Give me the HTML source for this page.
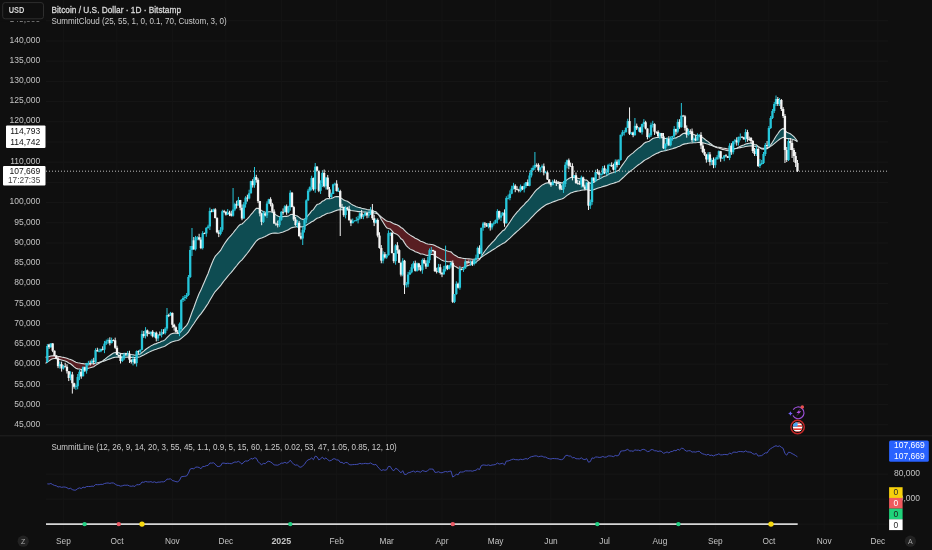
<!DOCTYPE html>
<html><head><meta charset="utf-8"><style>
html,body{margin:0;padding:0;background:#0f0f0f;width:932px;height:550px;overflow:hidden;position:relative}
</style></head><body>
<svg width="932" height="550" viewBox="0 0 932 550" style="position:absolute;left:0;top:0;will-change:transform">
<line x1="46" y1="424.80" x2="888" y2="424.80" stroke="#171717" stroke-width="1"/>
<line x1="46" y1="404.60" x2="888" y2="404.60" stroke="#171717" stroke-width="1"/>
<line x1="46" y1="384.40" x2="888" y2="384.40" stroke="#171717" stroke-width="1"/>
<line x1="46" y1="364.20" x2="888" y2="364.20" stroke="#171717" stroke-width="1"/>
<line x1="46" y1="344.00" x2="888" y2="344.00" stroke="#171717" stroke-width="1"/>
<line x1="46" y1="323.80" x2="888" y2="323.80" stroke="#171717" stroke-width="1"/>
<line x1="46" y1="303.60" x2="888" y2="303.60" stroke="#171717" stroke-width="1"/>
<line x1="46" y1="283.40" x2="888" y2="283.40" stroke="#171717" stroke-width="1"/>
<line x1="46" y1="263.20" x2="888" y2="263.20" stroke="#171717" stroke-width="1"/>
<line x1="46" y1="243.00" x2="888" y2="243.00" stroke="#171717" stroke-width="1"/>
<line x1="46" y1="222.80" x2="888" y2="222.80" stroke="#171717" stroke-width="1"/>
<line x1="46" y1="202.60" x2="888" y2="202.60" stroke="#171717" stroke-width="1"/>
<line x1="46" y1="182.40" x2="888" y2="182.40" stroke="#171717" stroke-width="1"/>
<line x1="46" y1="162.20" x2="888" y2="162.20" stroke="#171717" stroke-width="1"/>
<line x1="46" y1="142.00" x2="888" y2="142.00" stroke="#171717" stroke-width="1"/>
<line x1="46" y1="121.80" x2="888" y2="121.80" stroke="#171717" stroke-width="1"/>
<line x1="46" y1="101.60" x2="888" y2="101.60" stroke="#171717" stroke-width="1"/>
<line x1="46" y1="81.40" x2="888" y2="81.40" stroke="#171717" stroke-width="1"/>
<line x1="46" y1="61.20" x2="888" y2="61.20" stroke="#171717" stroke-width="1"/>
<line x1="46" y1="41.00" x2="888" y2="41.00" stroke="#171717" stroke-width="1"/>
<line x1="46" y1="20.80" x2="888" y2="20.80" stroke="#171717" stroke-width="1"/>
<line x1="63.40" y1="0" x2="63.40" y2="530" stroke="#151515" stroke-width="1"/>
<line x1="116.98" y1="0" x2="116.98" y2="530" stroke="#151515" stroke-width="1"/>
<line x1="172.35" y1="0" x2="172.35" y2="530" stroke="#151515" stroke-width="1"/>
<line x1="225.93" y1="0" x2="225.93" y2="530" stroke="#151515" stroke-width="1"/>
<line x1="281.29" y1="0" x2="281.29" y2="530" stroke="#151515" stroke-width="1"/>
<line x1="336.66" y1="0" x2="336.66" y2="530" stroke="#151515" stroke-width="1"/>
<line x1="386.67" y1="0" x2="386.67" y2="530" stroke="#151515" stroke-width="1"/>
<line x1="442.03" y1="0" x2="442.03" y2="530" stroke="#151515" stroke-width="1"/>
<line x1="495.61" y1="0" x2="495.61" y2="530" stroke="#151515" stroke-width="1"/>
<line x1="550.98" y1="0" x2="550.98" y2="530" stroke="#151515" stroke-width="1"/>
<line x1="604.56" y1="0" x2="604.56" y2="530" stroke="#151515" stroke-width="1"/>
<line x1="659.92" y1="0" x2="659.92" y2="530" stroke="#151515" stroke-width="1"/>
<line x1="715.29" y1="0" x2="715.29" y2="530" stroke="#151515" stroke-width="1"/>
<line x1="768.87" y1="0" x2="768.87" y2="530" stroke="#151515" stroke-width="1"/>
<line x1="824.24" y1="0" x2="824.24" y2="530" stroke="#151515" stroke-width="1"/>
<line x1="877.82" y1="0" x2="877.82" y2="530" stroke="#151515" stroke-width="1"/>
<line x1="46" y1="474.20" x2="888" y2="474.20" stroke="#171717" stroke-width="1"/>
<line x1="46" y1="499.15" x2="888" y2="499.15" stroke="#171717" stroke-width="1"/>
<line x1="46" y1="524.10" x2="888" y2="524.10" stroke="#171717" stroke-width="1"/>
<line x1="0" y1="435.8" x2="932" y2="435.8" stroke="#222" stroke-width="1"/>
<polygon points="45.54,363.39 47.33,362.03 49.11,360.87 50.90,359.51 52.68,358.81 54.47,358.56 56.26,358.52 58.04,359.08 59.83,359.44 61.61,360.09 63.40,360.53 65.19,360.98 66.97,361.72 68.76,362.93 70.54,363.78 72.33,365.22 74.12,366.84 75.90,368.28 77.69,368.89 79.47,369.06 81.26,369.56 83.05,369.31 84.83,369.36 86.62,368.82 88.40,368.30 90.19,367.83 91.98,367.22 93.76,366.74 95.55,365.39 97.33,364.24 99.12,363.17 100.91,362.00 101.14,361.86 101.14,361.86 100.91,361.92 99.12,362.39 97.33,362.79 95.55,363.21 93.76,363.69 91.98,363.74 90.19,363.85 88.40,363.87 86.62,363.90 84.83,363.92 83.05,363.66 81.26,363.52 79.47,363.05 77.69,362.72 75.90,362.18 74.12,361.29 72.33,360.33 70.54,359.48 68.76,358.92 66.97,358.20 65.19,357.72 63.40,357.37 61.61,357.04 59.83,356.61 58.04,356.32 56.26,355.95 54.47,355.85 52.68,355.84 50.90,356.03 49.11,356.49 47.33,356.84 45.54,357.24" fill="#581e22"/>
<polygon points="101.14,361.86 102.69,360.97 104.48,359.55 106.26,358.07 108.05,356.60 109.84,355.48 111.62,354.20 113.41,353.04 115.19,352.55 116.98,352.64 118.77,352.82 120.55,353.35 122.34,353.65 124.12,353.62 125.91,353.63 127.70,353.58 129.48,353.94 131.27,354.45 133.05,354.69 134.84,355.24 136.63,354.84 138.41,354.52 140.20,354.09 141.98,352.48 143.77,351.15 145.56,349.51 147.34,348.23 149.13,347.08 150.91,345.86 152.70,345.09 154.49,344.10 156.27,343.61 158.06,342.86 159.84,342.18 161.63,341.36 163.42,340.65 165.20,339.65 166.99,337.68 168.77,335.91 170.56,334.13 172.35,333.48 174.13,333.14 175.92,333.27 177.70,333.55 179.49,333.21 181.28,331.16 183.06,329.14 184.85,327.24 186.63,325.37 188.42,322.25 190.21,317.23 191.99,312.23 193.78,307.80 195.56,302.72 197.35,297.92 199.14,293.56 200.92,290.10 202.71,285.74 204.49,281.70 206.28,277.51 208.07,273.49 209.85,268.56 211.64,264.06 213.42,259.69 215.21,256.31 217.00,254.26 218.78,252.47 220.57,250.48 222.35,247.19 224.14,244.20 225.93,241.67 227.71,239.18 229.50,237.00 231.28,235.15 233.07,232.98 234.86,230.59 236.64,228.48 238.43,226.11 240.21,224.50 242.00,223.90 243.79,222.31 245.57,220.42 247.36,218.81 249.14,217.00 250.93,214.50 252.72,212.59 254.50,210.26 256.29,208.35 258.07,208.26 259.86,209.15 261.65,210.65 263.43,211.40 265.22,212.28 267.00,212.21 268.79,211.81 270.58,211.80 272.36,212.30 274.15,213.65 275.93,214.88 277.72,216.04 279.51,216.69 281.29,216.64 283.08,216.66 284.86,216.26 286.65,216.41 288.44,216.10 290.22,214.64 292.01,214.28 293.79,214.81 295.58,215.60 297.37,216.05 299.15,217.38 300.94,218.78 302.72,219.38 304.51,219.15 306.30,217.56 308.08,215.47 309.87,213.39 311.65,210.91 313.44,209.60 315.23,206.75 317.01,204.55 318.80,204.04 320.58,202.99 322.37,201.17 324.16,200.43 325.94,199.02 327.73,198.58 329.51,198.71 331.30,198.56 333.09,197.68 334.87,196.82 336.66,196.64 338.44,196.53 340.23,197.65 342.02,198.63 343.80,200.08 345.59,200.72 347.37,201.29 349.16,202.57 350.95,203.89 352.73,204.90 354.52,205.80 356.30,206.64 358.09,207.32 359.88,207.61 361.66,208.19 363.45,208.65 365.23,208.93 367.02,209.42 368.81,209.83 370.59,209.87 372.38,210.47 374.16,211.32 375.95,211.85 377.74,213.54 378.49,214.62 378.49,214.62 377.74,214.10 375.95,213.28 374.16,213.01 372.38,212.63 370.59,212.39 368.81,212.42 367.02,212.30 365.23,212.13 363.45,212.06 361.66,211.89 359.88,211.67 358.09,211.58 356.30,211.32 354.52,211.03 352.73,210.73 350.95,210.42 349.16,210.04 347.37,209.75 345.59,209.84 343.80,209.96 342.02,209.77 340.23,209.82 338.44,209.83 336.66,210.38 334.87,210.92 333.09,211.73 331.30,212.52 329.51,212.95 327.73,213.28 325.94,213.91 324.16,215.00 322.37,215.78 320.58,217.01 318.80,217.82 317.01,218.32 315.23,219.53 313.44,220.99 311.65,221.73 309.87,223.00 308.08,224.11 306.30,225.27 304.51,226.25 302.72,226.70 300.94,226.84 299.15,226.66 297.37,226.55 295.58,226.90 293.79,227.17 292.01,227.61 290.22,228.46 288.44,229.81 286.65,230.60 284.86,231.17 283.08,231.95 281.29,232.48 279.51,233.00 277.72,233.19 275.93,233.16 274.15,233.17 272.36,233.20 270.58,233.70 268.79,234.50 267.00,235.57 265.22,236.57 263.43,237.21 261.65,238.00 259.86,238.56 258.07,239.51 256.29,241.01 254.50,243.37 252.72,245.93 250.93,248.31 249.14,250.95 247.36,253.24 245.57,255.42 243.79,257.70 242.00,259.80 240.21,261.41 238.43,263.43 236.64,265.77 234.86,267.95 233.07,270.21 231.28,272.32 229.50,274.25 227.71,276.33 225.93,278.54 224.14,280.77 222.35,283.19 220.57,285.73 218.78,287.68 217.00,289.56 215.21,291.56 213.42,294.18 211.64,297.21 209.85,300.26 208.07,303.47 206.28,306.17 204.49,308.86 202.71,311.37 200.92,313.92 199.14,315.95 197.35,318.36 195.56,320.96 193.78,323.70 191.99,326.21 190.21,329.02 188.42,331.87 186.63,333.90 184.85,335.39 183.06,336.85 181.28,338.33 179.49,339.79 177.70,340.42 175.92,340.76 174.13,341.16 172.35,341.74 170.56,342.45 168.77,343.63 166.99,344.76 165.20,345.94 163.42,346.67 161.63,347.26 159.84,347.91 158.06,348.52 156.27,349.17 154.49,349.71 152.70,350.51 150.91,351.21 149.13,352.12 147.34,352.99 145.56,353.90 143.77,354.95 141.98,355.80 140.20,356.74 138.41,357.09 136.63,357.36 134.84,357.63 133.05,357.44 131.27,357.38 129.48,357.20 127.70,357.10 125.91,357.19 124.12,357.26 122.34,357.35 120.55,357.30 118.77,357.15 116.98,357.17 115.19,357.25 113.41,357.59 111.62,358.22 109.84,358.89 108.05,359.46 106.26,360.17 104.48,360.86 102.69,361.49 101.14,361.86" fill="#0e4c52"/>
<polygon points="378.49,214.62 379.52,216.10 381.31,219.53 383.09,222.31 384.88,225.24 386.67,227.82 388.45,228.48 390.24,228.98 392.02,230.87 393.81,233.08 395.60,233.75 397.38,234.60 399.17,236.27 400.95,238.72 402.74,239.89 404.53,242.88 406.31,245.59 408.10,247.37 409.88,248.87 411.67,249.87 413.46,250.52 415.24,251.71 417.03,252.25 418.81,253.02 420.60,253.95 422.39,254.07 424.17,254.50 425.96,255.20 427.74,255.42 429.53,254.93 431.32,254.52 433.10,254.31 434.89,255.69 436.67,257.00 438.46,257.92 440.25,259.15 442.03,260.35 443.82,261.00 445.60,261.26 447.39,261.66 449.18,261.70 450.96,261.45 452.75,264.21 454.53,266.13 456.32,267.09 458.11,268.28 459.89,267.93 461.68,267.70 463.46,267.39 465.25,266.59 467.04,265.88 468.82,265.23 470.61,264.53 472.39,264.00 474.18,263.17 475.97,262.22 477.75,260.58 479.54,259.50 480.47,257.98 480.47,257.98 479.54,258.59 477.75,258.82 475.97,259.24 474.18,259.28 472.39,259.22 470.61,258.99 468.82,258.85 467.04,258.69 465.25,258.54 463.46,258.41 461.68,258.03 459.89,257.59 458.11,257.18 456.32,256.06 454.53,255.06 452.75,253.63 450.96,251.86 449.18,251.47 447.39,250.97 445.60,250.33 443.82,249.78 442.03,249.07 440.25,248.15 438.46,247.24 436.67,246.51 434.89,245.60 433.10,244.66 431.32,244.43 429.53,244.24 427.74,244.03 425.96,243.44 424.17,242.59 422.39,241.83 420.60,241.16 418.81,240.09 417.03,239.09 415.24,238.19 413.46,236.99 411.67,236.04 409.88,234.92 408.10,233.59 406.31,232.14 404.53,230.32 402.74,228.45 400.95,227.48 399.17,226.01 397.38,224.96 395.60,224.35 393.81,223.86 392.02,222.73 390.24,221.78 388.45,221.47 386.67,221.08 384.88,219.79 383.09,218.35 381.31,216.98 379.52,215.33 378.49,214.62" fill="#581e22"/>
<polygon points="480.47,257.98 481.32,256.58 483.11,253.59 484.90,250.99 486.68,248.76 488.47,246.46 490.25,244.64 492.04,242.67 493.83,240.78 495.61,238.81 497.40,236.28 499.18,234.43 500.97,232.57 502.76,230.69 504.54,229.79 506.33,227.06 508.11,224.58 509.90,222.00 511.69,219.28 513.47,216.55 515.26,214.27 517.04,212.17 518.83,210.31 520.62,208.21 522.40,206.46 524.19,204.56 525.97,202.50 527.76,200.93 529.55,198.73 531.33,196.34 533.12,194.02 534.90,191.72 536.69,189.66 538.48,188.23 540.26,186.68 542.05,185.13 543.83,184.15 545.62,183.21 547.41,182.84 549.19,182.71 550.98,182.73 552.76,182.47 554.55,182.31 556.34,182.21 558.12,182.17 559.91,182.53 561.69,182.91 563.48,182.86 565.27,181.35 567.05,179.63 568.84,178.49 570.62,177.47 572.41,177.41 574.20,177.23 575.98,177.70 577.77,178.18 579.55,178.68 581.34,178.62 583.13,179.27 584.91,180.00 586.70,180.13 588.48,181.96 590.27,183.30 592.06,182.60 593.84,182.12 595.63,180.93 597.41,179.84 599.20,179.00 600.99,178.14 602.77,176.95 604.56,176.28 606.34,175.65 608.13,174.55 609.92,173.59 611.70,172.89 613.49,172.55 615.27,171.64 617.06,171.07 618.85,170.20 620.63,167.50 622.42,164.87 624.20,162.46 625.99,159.97 627.78,157.20 629.56,155.65 631.35,154.13 633.13,152.93 634.92,151.11 636.71,149.60 638.49,148.11 640.28,147.02 642.06,145.32 643.85,143.55 645.64,142.35 647.42,141.84 649.21,141.22 650.99,139.84 652.78,138.53 654.57,137.94 656.35,137.43 658.14,137.35 659.92,137.04 661.71,137.02 663.50,137.94 665.28,138.46 667.07,138.57 668.85,139.17 670.64,139.13 672.43,138.98 674.21,138.31 676.00,137.91 677.78,136.79 679.57,136.17 681.36,134.72 683.14,133.44 684.93,133.15 686.71,133.40 688.50,133.39 690.29,133.39 692.07,134.06 693.86,134.58 695.64,135.18 697.43,135.42 699.22,135.50 701.00,136.37 702.79,137.64 704.57,139.00 706.36,140.58 708.15,141.65 709.93,143.21 711.72,144.49 713.50,146.06 713.85,146.25 713.85,146.25 713.50,146.15 711.72,145.42 709.93,144.86 708.15,144.20 706.36,143.79 704.57,143.19 702.79,142.74 701.00,142.38 699.22,142.24 697.43,142.49 695.64,142.69 693.86,142.76 692.07,142.88 690.29,142.93 688.50,143.29 686.71,143.65 684.93,143.89 683.14,144.36 681.36,145.27 679.57,146.24 677.78,146.82 676.00,147.63 674.21,148.14 672.43,148.82 670.64,149.31 668.85,149.81 667.07,150.10 665.28,150.65 663.50,151.07 661.71,151.34 659.92,152.04 658.14,152.87 656.35,153.58 654.57,154.47 652.78,155.39 650.99,156.62 649.21,157.86 647.42,158.76 645.64,159.61 643.85,160.79 642.06,162.24 640.28,163.66 638.49,164.82 636.71,166.18 634.92,167.56 633.13,169.08 631.35,170.32 629.56,171.70 627.78,173.07 625.99,174.95 624.20,176.63 622.42,178.22 620.63,179.84 618.85,181.41 617.06,182.10 615.27,182.64 613.49,183.32 611.70,183.73 609.92,184.29 608.13,184.95 606.34,185.65 604.56,186.12 602.77,186.60 600.99,187.29 599.20,187.82 597.41,188.33 595.63,188.96 593.84,189.62 592.06,189.98 590.27,190.48 588.48,190.10 586.70,189.57 584.91,189.89 583.13,189.98 581.34,190.17 579.55,190.70 577.77,191.01 575.98,191.34 574.20,191.71 572.41,192.41 570.62,193.08 568.84,194.21 567.05,195.41 565.27,196.87 563.48,198.24 561.69,198.96 559.91,199.48 558.12,200.00 556.34,200.68 554.55,201.38 552.76,202.08 550.98,202.81 549.19,203.40 547.41,204.12 545.62,205.00 543.83,206.18 542.05,207.43 540.26,208.97 538.48,210.53 536.69,212.07 534.90,213.89 533.12,215.82 531.33,217.74 529.55,219.69 527.76,221.54 525.97,223.11 524.19,224.90 522.40,226.60 520.62,228.18 518.83,229.87 517.04,231.41 515.26,233.01 513.47,234.64 511.69,236.41 509.90,238.11 508.11,239.71 506.33,241.22 504.54,242.79 502.76,243.49 500.97,244.62 499.18,245.70 497.40,246.77 495.61,248.13 493.83,249.24 492.04,250.31 490.25,251.41 488.47,252.44 486.68,253.67 484.90,254.85 483.11,256.10 481.32,257.42 480.47,257.98" fill="#0e4c52"/>
<polygon points="713.85,146.25 715.29,147.02 717.08,147.77 718.86,147.99 720.65,148.75 722.43,149.40 724.22,149.81 726.01,150.23 727.79,150.74 729.58,150.27 731.36,150.33 733.15,149.55 734.94,148.74 735.82,148.45 735.82,148.45 734.94,148.54 733.15,148.82 731.36,149.06 729.58,148.91 727.79,149.00 726.01,148.64 724.22,148.33 722.43,148.04 720.65,147.64 718.86,147.21 717.08,147.04 715.29,146.63 713.85,146.25" fill="#581e22"/>
<polygon points="735.82,148.45 736.72,148.16 738.51,147.21 740.29,146.34 742.08,145.58 743.87,145.06 745.65,144.03 747.44,143.61 749.22,143.30 751.01,143.11 752.80,143.70 754.58,144.48 756.37,144.81 758.15,146.43 759.64,147.54 759.64,147.54 758.15,147.04 756.37,146.34 754.58,146.24 752.80,145.96 751.01,145.77 749.22,145.95 747.44,146.17 745.65,146.44 743.87,146.97 742.08,147.24 740.29,147.59 738.51,147.97 736.72,148.35 735.82,148.45" fill="#0e4c52"/>
<polygon points="759.64,147.54 759.94,147.77 761.73,148.93 763.51,149.31 765.30,148.97 767.08,148.73 768.21,147.72 768.21,147.72 767.08,148.18 765.30,148.27 763.51,148.39 761.73,148.19 759.94,147.64 759.64,147.54" fill="#581e22"/>
<polygon points="768.21,147.72 768.87,147.13 770.66,144.89 772.44,142.28 774.23,139.33 776.01,136.22 777.80,133.75 779.59,131.15 781.37,129.45 783.16,128.42 784.94,130.08 786.73,132.39 788.52,133.06 790.30,133.83 792.09,135.08 793.87,136.69 795.66,138.72 797.45,141.21 797.45,141.67 795.66,140.59 793.87,139.77 792.09,139.17 790.30,138.78 788.52,138.64 786.73,138.56 784.94,137.78 783.16,137.33 781.37,138.13 779.59,139.22 777.80,140.68 776.01,142.05 774.23,143.65 772.44,145.13 770.66,146.40 768.87,147.46 768.21,147.72" fill="#0e4c52"/>
<polyline points="45.54,363.39 47.33,362.03 49.11,360.87 50.90,359.51 52.68,358.81 54.47,358.56 56.26,358.52 58.04,359.08 59.83,359.44 61.61,360.09 63.40,360.53 65.19,360.98 66.97,361.72 68.76,362.93 70.54,363.78 72.33,365.22 74.12,366.84 75.90,368.28 77.69,368.89 79.47,369.06 81.26,369.56 83.05,369.31 84.83,369.36 86.62,368.82 88.40,368.30 90.19,367.83 91.98,367.22 93.76,366.74 95.55,365.39 97.33,364.24 99.12,363.17 100.91,362.00 102.69,360.97 104.48,359.55 106.26,358.07 108.05,356.60 109.84,355.48 111.62,354.20 113.41,353.04 115.19,352.55 116.98,352.64 118.77,352.82 120.55,353.35 122.34,353.65 124.12,353.62 125.91,353.63 127.70,353.58 129.48,353.94 131.27,354.45 133.05,354.69 134.84,355.24 136.63,354.84 138.41,354.52 140.20,354.09 141.98,352.48 143.77,351.15 145.56,349.51 147.34,348.23 149.13,347.08 150.91,345.86 152.70,345.09 154.49,344.10 156.27,343.61 158.06,342.86 159.84,342.18 161.63,341.36 163.42,340.65 165.20,339.65 166.99,337.68 168.77,335.91 170.56,334.13 172.35,333.48 174.13,333.14 175.92,333.27 177.70,333.55 179.49,333.21 181.28,331.16 183.06,329.14 184.85,327.24 186.63,325.37 188.42,322.25 190.21,317.23 191.99,312.23 193.78,307.80 195.56,302.72 197.35,297.92 199.14,293.56 200.92,290.10 202.71,285.74 204.49,281.70 206.28,277.51 208.07,273.49 209.85,268.56 211.64,264.06 213.42,259.69 215.21,256.31 217.00,254.26 218.78,252.47 220.57,250.48 222.35,247.19 224.14,244.20 225.93,241.67 227.71,239.18 229.50,237.00 231.28,235.15 233.07,232.98 234.86,230.59 236.64,228.48 238.43,226.11 240.21,224.50 242.00,223.90 243.79,222.31 245.57,220.42 247.36,218.81 249.14,217.00 250.93,214.50 252.72,212.59 254.50,210.26 256.29,208.35 258.07,208.26 259.86,209.15 261.65,210.65 263.43,211.40 265.22,212.28 267.00,212.21 268.79,211.81 270.58,211.80 272.36,212.30 274.15,213.65 275.93,214.88 277.72,216.04 279.51,216.69 281.29,216.64 283.08,216.66 284.86,216.26 286.65,216.41 288.44,216.10 290.22,214.64 292.01,214.28 293.79,214.81 295.58,215.60 297.37,216.05 299.15,217.38 300.94,218.78 302.72,219.38 304.51,219.15 306.30,217.56 308.08,215.47 309.87,213.39 311.65,210.91 313.44,209.60 315.23,206.75 317.01,204.55 318.80,204.04 320.58,202.99 322.37,201.17 324.16,200.43 325.94,199.02 327.73,198.58 329.51,198.71 331.30,198.56 333.09,197.68 334.87,196.82 336.66,196.64 338.44,196.53 340.23,197.65 342.02,198.63 343.80,200.08 345.59,200.72 347.37,201.29 349.16,202.57 350.95,203.89 352.73,204.90 354.52,205.80 356.30,206.64 358.09,207.32 359.88,207.61 361.66,208.19 363.45,208.65 365.23,208.93 367.02,209.42 368.81,209.83 370.59,209.87 372.38,210.47 374.16,211.32 375.95,211.85 377.74,213.54 379.52,216.10 381.31,219.53 383.09,222.31 384.88,225.24 386.67,227.82 388.45,228.48 390.24,228.98 392.02,230.87 393.81,233.08 395.60,233.75 397.38,234.60 399.17,236.27 400.95,238.72 402.74,239.89 404.53,242.88 406.31,245.59 408.10,247.37 409.88,248.87 411.67,249.87 413.46,250.52 415.24,251.71 417.03,252.25 418.81,253.02 420.60,253.95 422.39,254.07 424.17,254.50 425.96,255.20 427.74,255.42 429.53,254.93 431.32,254.52 433.10,254.31 434.89,255.69 436.67,257.00 438.46,257.92 440.25,259.15 442.03,260.35 443.82,261.00 445.60,261.26 447.39,261.66 449.18,261.70 450.96,261.45 452.75,264.21 454.53,266.13 456.32,267.09 458.11,268.28 459.89,267.93 461.68,267.70 463.46,267.39 465.25,266.59 467.04,265.88 468.82,265.23 470.61,264.53 472.39,264.00 474.18,263.17 475.97,262.22 477.75,260.58 479.54,259.50 481.32,256.58 483.11,253.59 484.90,250.99 486.68,248.76 488.47,246.46 490.25,244.64 492.04,242.67 493.83,240.78 495.61,238.81 497.40,236.28 499.18,234.43 500.97,232.57 502.76,230.69 504.54,229.79 506.33,227.06 508.11,224.58 509.90,222.00 511.69,219.28 513.47,216.55 515.26,214.27 517.04,212.17 518.83,210.31 520.62,208.21 522.40,206.46 524.19,204.56 525.97,202.50 527.76,200.93 529.55,198.73 531.33,196.34 533.12,194.02 534.90,191.72 536.69,189.66 538.48,188.23 540.26,186.68 542.05,185.13 543.83,184.15 545.62,183.21 547.41,182.84 549.19,182.71 550.98,182.73 552.76,182.47 554.55,182.31 556.34,182.21 558.12,182.17 559.91,182.53 561.69,182.91 563.48,182.86 565.27,181.35 567.05,179.63 568.84,178.49 570.62,177.47 572.41,177.41 574.20,177.23 575.98,177.70 577.77,178.18 579.55,178.68 581.34,178.62 583.13,179.27 584.91,180.00 586.70,180.13 588.48,181.96 590.27,183.30 592.06,182.60 593.84,182.12 595.63,180.93 597.41,179.84 599.20,179.00 600.99,178.14 602.77,176.95 604.56,176.28 606.34,175.65 608.13,174.55 609.92,173.59 611.70,172.89 613.49,172.55 615.27,171.64 617.06,171.07 618.85,170.20 620.63,167.50 622.42,164.87 624.20,162.46 625.99,159.97 627.78,157.20 629.56,155.65 631.35,154.13 633.13,152.93 634.92,151.11 636.71,149.60 638.49,148.11 640.28,147.02 642.06,145.32 643.85,143.55 645.64,142.35 647.42,141.84 649.21,141.22 650.99,139.84 652.78,138.53 654.57,137.94 656.35,137.43 658.14,137.35 659.92,137.04 661.71,137.02 663.50,137.94 665.28,138.46 667.07,138.57 668.85,139.17 670.64,139.13 672.43,138.98 674.21,138.31 676.00,137.91 677.78,136.79 679.57,136.17 681.36,134.72 683.14,133.44 684.93,133.15 686.71,133.40 688.50,133.39 690.29,133.39 692.07,134.06 693.86,134.58 695.64,135.18 697.43,135.42 699.22,135.50 701.00,136.37 702.79,137.64 704.57,139.00 706.36,140.58 708.15,141.65 709.93,143.21 711.72,144.49 713.50,146.06 715.29,147.02 717.08,147.77 718.86,147.99 720.65,148.75 722.43,149.40 724.22,149.81 726.01,150.23 727.79,150.74 729.58,150.27 731.36,150.33 733.15,149.55 734.94,148.74 736.72,148.16 738.51,147.21 740.29,146.34 742.08,145.58 743.87,145.06 745.65,144.03 747.44,143.61 749.22,143.30 751.01,143.11 752.80,143.70 754.58,144.48 756.37,144.81 758.15,146.43 759.94,147.77 761.73,148.93 763.51,149.31 765.30,148.97 767.08,148.73 768.87,147.13 770.66,144.89 772.44,142.28 774.23,139.33 776.01,136.22 777.80,133.75 779.59,131.15 781.37,129.45 783.16,128.42 784.94,130.08 786.73,132.39 788.52,133.06 790.30,133.83 792.09,135.08 793.87,136.69 795.66,138.72 797.45,141.21" fill="none" stroke="#d4dcdc" stroke-width="1.1"/>
<polyline points="45.54,357.24 47.33,356.84 49.11,356.49 50.90,356.03 52.68,355.84 54.47,355.85 56.26,355.95 58.04,356.32 59.83,356.61 61.61,357.04 63.40,357.37 65.19,357.72 66.97,358.20 68.76,358.92 70.54,359.48 72.33,360.33 74.12,361.29 75.90,362.18 77.69,362.72 79.47,363.05 81.26,363.52 83.05,363.66 84.83,363.92 86.62,363.90 88.40,363.87 90.19,363.85 91.98,363.74 93.76,363.69 95.55,363.21 97.33,362.79 99.12,362.39 100.91,361.92 102.69,361.49 104.48,360.86 106.26,360.17 108.05,359.46 109.84,358.89 111.62,358.22 113.41,357.59 115.19,357.25 116.98,357.17 118.77,357.15 120.55,357.30 122.34,357.35 124.12,357.26 125.91,357.19 127.70,357.10 129.48,357.20 131.27,357.38 133.05,357.44 134.84,357.63 136.63,357.36 138.41,357.09 140.20,356.74 141.98,355.80 143.77,354.95 145.56,353.90 147.34,352.99 149.13,352.12 150.91,351.21 152.70,350.51 154.49,349.71 156.27,349.17 158.06,348.52 159.84,347.91 161.63,347.26 163.42,346.67 165.20,345.94 166.99,344.76 168.77,343.63 170.56,342.45 172.35,341.74 174.13,341.16 175.92,340.76 177.70,340.42 179.49,339.79 181.28,338.33 183.06,336.85 184.85,335.39 186.63,333.90 188.42,331.87 190.21,329.02 191.99,326.21 193.78,323.70 195.56,320.96 197.35,318.36 199.14,315.95 200.92,313.92 202.71,311.37 204.49,308.86 206.28,306.17 208.07,303.47 209.85,300.26 211.64,297.21 213.42,294.18 215.21,291.56 217.00,289.56 218.78,287.68 220.57,285.73 222.35,283.19 224.14,280.77 225.93,278.54 227.71,276.33 229.50,274.25 231.28,272.32 233.07,270.21 234.86,267.95 236.64,265.77 238.43,263.43 240.21,261.41 242.00,259.80 243.79,257.70 245.57,255.42 247.36,253.24 249.14,250.95 250.93,248.31 252.72,245.93 254.50,243.37 256.29,241.01 258.07,239.51 259.86,238.56 261.65,238.00 263.43,237.21 265.22,236.57 267.00,235.57 268.79,234.50 270.58,233.70 272.36,233.20 274.15,233.17 275.93,233.16 277.72,233.19 279.51,233.00 281.29,232.48 283.08,231.95 284.86,231.17 286.65,230.60 288.44,229.81 290.22,228.46 292.01,227.61 293.79,227.17 295.58,226.90 297.37,226.55 299.15,226.66 300.94,226.84 302.72,226.70 304.51,226.25 306.30,225.27 308.08,224.11 309.87,223.00 311.65,221.73 313.44,220.99 315.23,219.53 317.01,218.32 318.80,217.82 320.58,217.01 322.37,215.78 324.16,215.00 325.94,213.91 327.73,213.28 329.51,212.95 331.30,212.52 333.09,211.73 334.87,210.92 336.66,210.38 338.44,209.83 340.23,209.82 342.02,209.77 343.80,209.96 345.59,209.84 347.37,209.75 349.16,210.04 350.95,210.42 352.73,210.73 354.52,211.03 356.30,211.32 358.09,211.58 359.88,211.67 361.66,211.89 363.45,212.06 365.23,212.13 367.02,212.30 368.81,212.42 370.59,212.39 372.38,212.63 374.16,213.01 375.95,213.28 377.74,214.10 379.52,215.33 381.31,216.98 383.09,218.35 384.88,219.79 386.67,221.08 388.45,221.47 390.24,221.78 392.02,222.73 393.81,223.86 395.60,224.35 397.38,224.96 399.17,226.01 400.95,227.48 402.74,228.45 404.53,230.32 406.31,232.14 408.10,233.59 409.88,234.92 411.67,236.04 413.46,236.99 415.24,238.19 417.03,239.09 418.81,240.09 420.60,241.16 422.39,241.83 424.17,242.59 425.96,243.44 427.74,244.03 429.53,244.24 431.32,244.43 433.10,244.66 434.89,245.60 436.67,246.51 438.46,247.24 440.25,248.15 442.03,249.07 443.82,249.78 445.60,250.33 447.39,250.97 449.18,251.47 450.96,251.86 452.75,253.63 454.53,255.06 456.32,256.06 458.11,257.18 459.89,257.59 461.68,258.03 463.46,258.41 465.25,258.54 467.04,258.69 468.82,258.85 470.61,258.99 472.39,259.22 474.18,259.28 475.97,259.24 477.75,258.82 479.54,258.59 481.32,257.42 483.11,256.10 484.90,254.85 486.68,253.67 488.47,252.44 490.25,251.41 492.04,250.31 493.83,249.24 495.61,248.13 497.40,246.77 499.18,245.70 500.97,244.62 502.76,243.49 504.54,242.79 506.33,241.22 508.11,239.71 509.90,238.11 511.69,236.41 513.47,234.64 515.26,233.01 517.04,231.41 518.83,229.87 520.62,228.18 522.40,226.60 524.19,224.90 525.97,223.11 527.76,221.54 529.55,219.69 531.33,217.74 533.12,215.82 534.90,213.89 536.69,212.07 538.48,210.53 540.26,208.97 542.05,207.43 543.83,206.18 545.62,205.00 547.41,204.12 549.19,203.40 550.98,202.81 552.76,202.08 554.55,201.38 556.34,200.68 558.12,200.00 559.91,199.48 561.69,198.96 563.48,198.24 565.27,196.87 567.05,195.41 568.84,194.21 570.62,193.08 572.41,192.41 574.20,191.71 575.98,191.34 577.77,191.01 579.55,190.70 581.34,190.17 583.13,189.98 584.91,189.89 586.70,189.57 588.48,190.10 590.27,190.48 592.06,189.98 593.84,189.62 595.63,188.96 597.41,188.33 599.20,187.82 600.99,187.29 602.77,186.60 604.56,186.12 606.34,185.65 608.13,184.95 609.92,184.29 611.70,183.73 613.49,183.32 615.27,182.64 617.06,182.10 618.85,181.41 620.63,179.84 622.42,178.22 624.20,176.63 625.99,174.95 627.78,173.07 629.56,171.70 631.35,170.32 633.13,169.08 634.92,167.56 636.71,166.18 638.49,164.82 640.28,163.66 642.06,162.24 643.85,160.79 645.64,159.61 647.42,158.76 649.21,157.86 650.99,156.62 652.78,155.39 654.57,154.47 656.35,153.58 658.14,152.87 659.92,152.04 661.71,151.34 663.50,151.07 665.28,150.65 667.07,150.10 668.85,149.81 670.64,149.31 672.43,148.82 674.21,148.14 676.00,147.63 677.78,146.82 679.57,146.24 681.36,145.27 683.14,144.36 684.93,143.89 686.71,143.65 688.50,143.29 690.29,142.93 692.07,142.88 693.86,142.76 695.64,142.69 697.43,142.49 699.22,142.24 701.00,142.38 702.79,142.74 704.57,143.19 706.36,143.79 708.15,144.20 709.93,144.86 711.72,145.42 713.50,146.15 715.29,146.63 717.08,147.04 718.86,147.21 720.65,147.64 722.43,148.04 724.22,148.33 726.01,148.64 727.79,149.00 729.58,148.91 731.36,149.06 733.15,148.82 734.94,148.54 736.72,148.35 738.51,147.97 740.29,147.59 742.08,147.24 743.87,146.97 745.65,146.44 747.44,146.17 749.22,145.95 751.01,145.77 752.80,145.96 754.58,146.24 756.37,146.34 758.15,147.04 759.94,147.64 761.73,148.19 763.51,148.39 765.30,148.27 767.08,148.18 768.87,147.46 770.66,146.40 772.44,145.13 774.23,143.65 776.01,142.05 777.80,140.68 779.59,139.22 781.37,138.13 783.16,137.33 784.94,137.78 786.73,138.56 788.52,138.64 790.30,138.78 792.09,139.17 793.87,139.77 795.66,140.59 797.45,141.67" fill="none" stroke="#d4dcdc" stroke-width="1.1"/>
<line x1="47.33" y1="344.00" x2="47.33" y2="363.00" stroke="#26c6da" stroke-width="1"/>
<rect x="46.18" y="346.00" width="2.3" height="16.00" fill="#26c6da"/>
<line x1="49.11" y1="343.79" x2="49.11" y2="348.87" stroke="#f4f4f4" stroke-width="1"/>
<rect x="47.96" y="344.51" width="2.3" height="2.54" fill="#f4f4f4"/>
<line x1="50.90" y1="343.39" x2="50.90" y2="348.00" stroke="#26c6da" stroke-width="1"/>
<rect x="49.75" y="343.41" width="2.3" height="3.65" fill="#26c6da"/>
<line x1="52.68" y1="343.08" x2="52.68" y2="352.16" stroke="#f4f4f4" stroke-width="1"/>
<rect x="51.53" y="343.41" width="2.3" height="7.32" fill="#f4f4f4"/>
<line x1="54.47" y1="350.57" x2="54.47" y2="356.13" stroke="#f4f4f4" stroke-width="1"/>
<rect x="53.32" y="350.72" width="2.3" height="5.33" fill="#f4f4f4"/>
<line x1="56.26" y1="354.96" x2="56.26" y2="359.27" stroke="#f4f4f4" stroke-width="1"/>
<rect x="55.11" y="356.05" width="2.3" height="2.38" fill="#f4f4f4"/>
<line x1="58.04" y1="356.32" x2="58.04" y2="368.11" stroke="#f4f4f4" stroke-width="1"/>
<rect x="56.89" y="358.43" width="2.3" height="7.77" fill="#f4f4f4"/>
<line x1="59.83" y1="361.53" x2="59.83" y2="368.57" stroke="#26c6da" stroke-width="1"/>
<rect x="58.68" y="364.23" width="2.3" height="1.98" fill="#26c6da"/>
<line x1="61.61" y1="361.65" x2="61.61" y2="371.58" stroke="#f4f4f4" stroke-width="1"/>
<rect x="60.46" y="364.23" width="2.3" height="4.19" fill="#f4f4f4"/>
<line x1="63.40" y1="364.92" x2="63.40" y2="369.59" stroke="#26c6da" stroke-width="1"/>
<rect x="62.25" y="366.32" width="2.3" height="2.09" fill="#26c6da"/>
<line x1="65.19" y1="362.78" x2="65.19" y2="367.37" stroke="#f4f4f4" stroke-width="1"/>
<rect x="64.04" y="366.32" width="2.3" height="0.80" fill="#f4f4f4"/>
<line x1="66.97" y1="364.23" x2="66.97" y2="373.52" stroke="#f4f4f4" stroke-width="1"/>
<rect x="65.82" y="366.83" width="2.3" height="4.37" fill="#f4f4f4"/>
<line x1="68.76" y1="371.05" x2="68.76" y2="381.05" stroke="#f4f4f4" stroke-width="1"/>
<rect x="67.61" y="371.21" width="2.3" height="6.83" fill="#f4f4f4"/>
<line x1="70.54" y1="371.30" x2="70.54" y2="380.30" stroke="#26c6da" stroke-width="1"/>
<rect x="69.39" y="374.51" width="2.3" height="3.53" fill="#26c6da"/>
<line x1="72.33" y1="371.87" x2="72.33" y2="393.60" stroke="#f4f4f4" stroke-width="1"/>
<rect x="71.18" y="374.51" width="2.3" height="8.70" fill="#f4f4f4"/>
<line x1="74.12" y1="382.71" x2="74.12" y2="388.72" stroke="#f4f4f4" stroke-width="1"/>
<rect x="72.97" y="383.21" width="2.3" height="3.63" fill="#f4f4f4"/>
<line x1="75.90" y1="384.45" x2="75.90" y2="389.84" stroke="#26c6da" stroke-width="1"/>
<rect x="74.75" y="386.27" width="2.3" height="0.80" fill="#26c6da"/>
<line x1="77.69" y1="374.02" x2="77.69" y2="389.25" stroke="#26c6da" stroke-width="1"/>
<rect x="76.54" y="376.91" width="2.3" height="9.36" fill="#26c6da"/>
<line x1="79.47" y1="369.68" x2="79.47" y2="380.13" stroke="#26c6da" stroke-width="1"/>
<rect x="78.32" y="371.79" width="2.3" height="5.13" fill="#26c6da"/>
<line x1="81.26" y1="369.33" x2="81.26" y2="378.76" stroke="#f4f4f4" stroke-width="1"/>
<rect x="80.11" y="371.79" width="2.3" height="4.47" fill="#f4f4f4"/>
<line x1="83.05" y1="366.32" x2="83.05" y2="376.37" stroke="#26c6da" stroke-width="1"/>
<rect x="81.90" y="367.15" width="2.3" height="9.11" fill="#26c6da"/>
<line x1="84.83" y1="366.67" x2="84.83" y2="371.96" stroke="#f4f4f4" stroke-width="1"/>
<rect x="83.68" y="367.15" width="2.3" height="3.51" fill="#f4f4f4"/>
<line x1="86.62" y1="362.88" x2="86.62" y2="373.67" stroke="#26c6da" stroke-width="1"/>
<rect x="85.47" y="363.26" width="2.3" height="7.41" fill="#26c6da"/>
<line x1="88.40" y1="360.85" x2="88.40" y2="365.52" stroke="#26c6da" stroke-width="1"/>
<rect x="87.25" y="362.86" width="2.3" height="0.80" fill="#26c6da"/>
<line x1="90.19" y1="360.60" x2="90.19" y2="365.54" stroke="#f4f4f4" stroke-width="1"/>
<rect x="89.04" y="362.86" width="2.3" height="0.80" fill="#f4f4f4"/>
<line x1="91.98" y1="358.92" x2="91.98" y2="363.10" stroke="#26c6da" stroke-width="1"/>
<rect x="90.83" y="360.69" width="2.3" height="2.40" fill="#26c6da"/>
<line x1="93.76" y1="357.81" x2="93.76" y2="364.65" stroke="#f4f4f4" stroke-width="1"/>
<rect x="92.61" y="360.69" width="2.3" height="1.27" fill="#f4f4f4"/>
<line x1="95.55" y1="348.32" x2="95.55" y2="363.88" stroke="#26c6da" stroke-width="1"/>
<rect x="94.40" y="350.13" width="2.3" height="11.83" fill="#26c6da"/>
<line x1="97.33" y1="347.76" x2="97.33" y2="351.58" stroke="#f4f4f4" stroke-width="1"/>
<rect x="96.18" y="350.13" width="2.3" height="1.21" fill="#f4f4f4"/>
<line x1="99.12" y1="348.63" x2="99.12" y2="352.25" stroke="#26c6da" stroke-width="1"/>
<rect x="97.97" y="351.28" width="2.3" height="0.80" fill="#26c6da"/>
<line x1="100.91" y1="348.66" x2="100.91" y2="352.23" stroke="#26c6da" stroke-width="1"/>
<rect x="99.76" y="348.93" width="2.3" height="2.35" fill="#26c6da"/>
<line x1="102.69" y1="346.30" x2="102.69" y2="350.40" stroke="#f4f4f4" stroke-width="1"/>
<rect x="101.54" y="348.93" width="2.3" height="0.80" fill="#f4f4f4"/>
<line x1="104.48" y1="340.95" x2="104.48" y2="353.17" stroke="#26c6da" stroke-width="1"/>
<rect x="103.33" y="343.61" width="2.3" height="6.05" fill="#26c6da"/>
<line x1="106.26" y1="339.57" x2="106.26" y2="344.99" stroke="#26c6da" stroke-width="1"/>
<rect x="105.11" y="341.35" width="2.3" height="2.26" fill="#26c6da"/>
<line x1="108.05" y1="338.35" x2="108.05" y2="343.81" stroke="#26c6da" stroke-width="1"/>
<rect x="106.90" y="340.07" width="2.3" height="1.28" fill="#26c6da"/>
<line x1="109.84" y1="337.31" x2="109.84" y2="345.33" stroke="#f4f4f4" stroke-width="1"/>
<rect x="108.69" y="340.07" width="2.3" height="3.04" fill="#f4f4f4"/>
<line x1="111.62" y1="337.67" x2="111.62" y2="343.39" stroke="#26c6da" stroke-width="1"/>
<rect x="110.47" y="339.98" width="2.3" height="3.13" fill="#26c6da"/>
<line x1="113.41" y1="339.45" x2="113.41" y2="341.24" stroke="#f4f4f4" stroke-width="1"/>
<rect x="112.26" y="339.98" width="2.3" height="0.80" fill="#f4f4f4"/>
<line x1="115.19" y1="337.65" x2="115.19" y2="348.88" stroke="#f4f4f4" stroke-width="1"/>
<rect x="114.04" y="340.32" width="2.3" height="7.46" fill="#f4f4f4"/>
<line x1="116.98" y1="345.74" x2="116.98" y2="354.97" stroke="#f4f4f4" stroke-width="1"/>
<rect x="115.83" y="347.78" width="2.3" height="7.14" fill="#f4f4f4"/>
<line x1="118.77" y1="354.71" x2="118.77" y2="357.21" stroke="#f4f4f4" stroke-width="1"/>
<rect x="117.62" y="354.92" width="2.3" height="1.31" fill="#f4f4f4"/>
<line x1="120.55" y1="353.82" x2="120.55" y2="363.49" stroke="#f4f4f4" stroke-width="1"/>
<rect x="119.40" y="356.24" width="2.3" height="4.76" fill="#f4f4f4"/>
<line x1="122.34" y1="356.07" x2="122.34" y2="362.05" stroke="#26c6da" stroke-width="1"/>
<rect x="121.19" y="358.51" width="2.3" height="2.49" fill="#26c6da"/>
<line x1="124.12" y1="352.63" x2="124.12" y2="360.18" stroke="#26c6da" stroke-width="1"/>
<rect x="122.97" y="354.49" width="2.3" height="4.02" fill="#26c6da"/>
<line x1="125.91" y1="352.81" x2="125.91" y2="355.59" stroke="#f4f4f4" stroke-width="1"/>
<rect x="124.76" y="354.49" width="2.3" height="0.80" fill="#f4f4f4"/>
<line x1="127.70" y1="351.08" x2="127.70" y2="355.88" stroke="#26c6da" stroke-width="1"/>
<rect x="126.55" y="354.30" width="2.3" height="0.87" fill="#26c6da"/>
<line x1="129.48" y1="350.77" x2="129.48" y2="362.98" stroke="#f4f4f4" stroke-width="1"/>
<rect x="128.33" y="354.30" width="2.3" height="5.32" fill="#f4f4f4"/>
<line x1="131.27" y1="359.55" x2="131.27" y2="363.58" stroke="#f4f4f4" stroke-width="1"/>
<rect x="130.12" y="359.61" width="2.3" height="2.32" fill="#f4f4f4"/>
<line x1="133.05" y1="356.07" x2="133.05" y2="365.42" stroke="#26c6da" stroke-width="1"/>
<rect x="131.90" y="359.02" width="2.3" height="2.91" fill="#26c6da"/>
<line x1="134.84" y1="357.40" x2="134.84" y2="364.13" stroke="#f4f4f4" stroke-width="1"/>
<rect x="133.69" y="359.02" width="2.3" height="4.14" fill="#f4f4f4"/>
<line x1="136.63" y1="350.39" x2="136.63" y2="366.57" stroke="#26c6da" stroke-width="1"/>
<rect x="135.48" y="351.15" width="2.3" height="12.01" fill="#26c6da"/>
<line x1="138.41" y1="350.39" x2="138.41" y2="353.93" stroke="#f4f4f4" stroke-width="1"/>
<rect x="137.26" y="351.15" width="2.3" height="0.80" fill="#f4f4f4"/>
<line x1="140.20" y1="349.31" x2="140.20" y2="353.72" stroke="#26c6da" stroke-width="1"/>
<rect x="139.05" y="349.82" width="2.3" height="2.01" fill="#26c6da"/>
<line x1="141.98" y1="330.51" x2="141.98" y2="350.30" stroke="#26c6da" stroke-width="1"/>
<rect x="140.83" y="333.94" width="2.3" height="15.88" fill="#26c6da"/>
<line x1="143.77" y1="330.99" x2="143.77" y2="337.79" stroke="#f4f4f4" stroke-width="1"/>
<rect x="142.62" y="333.94" width="2.3" height="2.02" fill="#f4f4f4"/>
<line x1="145.56" y1="327.18" x2="145.56" y2="338.49" stroke="#26c6da" stroke-width="1"/>
<rect x="144.41" y="330.37" width="2.3" height="5.59" fill="#26c6da"/>
<line x1="147.34" y1="329.54" x2="147.34" y2="336.54" stroke="#f4f4f4" stroke-width="1"/>
<rect x="146.19" y="330.37" width="2.3" height="2.94" fill="#f4f4f4"/>
<line x1="149.13" y1="331.55" x2="149.13" y2="333.91" stroke="#f4f4f4" stroke-width="1"/>
<rect x="147.98" y="333.30" width="2.3" height="0.80" fill="#f4f4f4"/>
<line x1="150.91" y1="331.71" x2="150.91" y2="335.59" stroke="#26c6da" stroke-width="1"/>
<rect x="149.76" y="331.72" width="2.3" height="2.10" fill="#26c6da"/>
<line x1="152.70" y1="330.10" x2="152.70" y2="337.41" stroke="#f4f4f4" stroke-width="1"/>
<rect x="151.55" y="331.72" width="2.3" height="4.60" fill="#f4f4f4"/>
<line x1="154.49" y1="332.19" x2="154.49" y2="337.56" stroke="#26c6da" stroke-width="1"/>
<rect x="153.34" y="332.70" width="2.3" height="3.62" fill="#26c6da"/>
<line x1="156.27" y1="331.56" x2="156.27" y2="341.45" stroke="#f4f4f4" stroke-width="1"/>
<rect x="155.12" y="332.70" width="2.3" height="5.72" fill="#f4f4f4"/>
<line x1="158.06" y1="334.52" x2="158.06" y2="341.13" stroke="#26c6da" stroke-width="1"/>
<rect x="156.91" y="334.53" width="2.3" height="3.89" fill="#26c6da"/>
<line x1="159.84" y1="331.51" x2="159.84" y2="335.25" stroke="#f4f4f4" stroke-width="1"/>
<rect x="158.69" y="334.53" width="2.3" height="0.80" fill="#f4f4f4"/>
<line x1="161.63" y1="329.09" x2="161.63" y2="337.39" stroke="#26c6da" stroke-width="1"/>
<rect x="160.48" y="332.42" width="2.3" height="2.40" fill="#26c6da"/>
<line x1="163.42" y1="329.18" x2="163.42" y2="334.17" stroke="#f4f4f4" stroke-width="1"/>
<rect x="162.27" y="332.42" width="2.3" height="0.80" fill="#f4f4f4"/>
<line x1="165.20" y1="327.25" x2="165.20" y2="334.54" stroke="#26c6da" stroke-width="1"/>
<rect x="164.05" y="328.59" width="2.3" height="4.53" fill="#26c6da"/>
<line x1="166.99" y1="308.00" x2="166.99" y2="330.72" stroke="#26c6da" stroke-width="1"/>
<rect x="165.84" y="315.04" width="2.3" height="13.55" fill="#26c6da"/>
<line x1="168.77" y1="313.74" x2="168.77" y2="317.07" stroke="#f4f4f4" stroke-width="1"/>
<rect x="167.62" y="315.04" width="2.3" height="0.80" fill="#f4f4f4"/>
<line x1="170.56" y1="311.89" x2="170.56" y2="315.70" stroke="#26c6da" stroke-width="1"/>
<rect x="169.41" y="312.88" width="2.3" height="2.64" fill="#26c6da"/>
<line x1="172.35" y1="312.52" x2="172.35" y2="327.77" stroke="#f4f4f4" stroke-width="1"/>
<rect x="171.20" y="312.88" width="2.3" height="11.88" fill="#f4f4f4"/>
<line x1="174.13" y1="323.73" x2="174.13" y2="330.60" stroke="#f4f4f4" stroke-width="1"/>
<rect x="172.98" y="324.76" width="2.3" height="2.47" fill="#f4f4f4"/>
<line x1="175.92" y1="326.34" x2="175.92" y2="332.80" stroke="#f4f4f4" stroke-width="1"/>
<rect x="174.77" y="327.24" width="2.3" height="4.61" fill="#f4f4f4"/>
<line x1="177.70" y1="330.01" x2="177.70" y2="333.44" stroke="#f4f4f4" stroke-width="1"/>
<rect x="176.55" y="331.85" width="2.3" height="0.91" fill="#f4f4f4"/>
<line x1="179.49" y1="322.53" x2="179.49" y2="336.20" stroke="#26c6da" stroke-width="1"/>
<rect x="178.34" y="323.88" width="2.3" height="8.88" fill="#26c6da"/>
<line x1="181.28" y1="299.00" x2="181.28" y2="331.00" stroke="#26c6da" stroke-width="1"/>
<rect x="180.13" y="300.00" width="2.3" height="29.00" fill="#26c6da"/>
<line x1="183.06" y1="296.00" x2="183.06" y2="302.00" stroke="#26c6da" stroke-width="1"/>
<rect x="181.91" y="298.00" width="2.3" height="2.00" fill="#26c6da"/>
<line x1="184.85" y1="295.00" x2="184.85" y2="301.00" stroke="#26c6da" stroke-width="1"/>
<rect x="183.70" y="297.00" width="2.3" height="1.00" fill="#26c6da"/>
<line x1="186.63" y1="293.00" x2="186.63" y2="299.00" stroke="#26c6da" stroke-width="1"/>
<rect x="185.48" y="295.00" width="2.3" height="2.00" fill="#26c6da"/>
<line x1="188.42" y1="275.00" x2="188.42" y2="296.00" stroke="#26c6da" stroke-width="1"/>
<rect x="187.27" y="277.00" width="2.3" height="18.00" fill="#26c6da"/>
<line x1="190.21" y1="246.00" x2="190.21" y2="278.00" stroke="#26c6da" stroke-width="1"/>
<rect x="189.06" y="250.00" width="2.3" height="27.00" fill="#26c6da"/>
<line x1="191.99" y1="228.00" x2="191.99" y2="256.00" stroke="#26c6da" stroke-width="1"/>
<rect x="190.84" y="246.00" width="2.3" height="4.00" fill="#26c6da"/>
<line x1="193.78" y1="236.99" x2="193.78" y2="249.77" stroke="#f4f4f4" stroke-width="1"/>
<rect x="192.63" y="240.32" width="2.3" height="8.99" fill="#f4f4f4"/>
<line x1="195.56" y1="235.88" x2="195.56" y2="250.55" stroke="#26c6da" stroke-width="1"/>
<rect x="194.41" y="237.58" width="2.3" height="11.73" fill="#26c6da"/>
<line x1="197.35" y1="236.26" x2="197.35" y2="240.24" stroke="#26c6da" stroke-width="1"/>
<rect x="196.20" y="237.33" width="2.3" height="0.80" fill="#26c6da"/>
<line x1="199.14" y1="233.81" x2="199.14" y2="240.53" stroke="#f4f4f4" stroke-width="1"/>
<rect x="197.99" y="237.33" width="2.3" height="2.27" fill="#f4f4f4"/>
<line x1="200.92" y1="237.23" x2="200.92" y2="249.15" stroke="#f4f4f4" stroke-width="1"/>
<rect x="199.77" y="239.60" width="2.3" height="8.47" fill="#f4f4f4"/>
<line x1="202.71" y1="231.19" x2="202.71" y2="249.49" stroke="#26c6da" stroke-width="1"/>
<rect x="201.56" y="233.20" width="2.3" height="14.87" fill="#26c6da"/>
<line x1="204.49" y1="232.59" x2="204.49" y2="234.08" stroke="#f4f4f4" stroke-width="1"/>
<rect x="203.34" y="233.20" width="2.3" height="0.80" fill="#f4f4f4"/>
<line x1="206.28" y1="227.12" x2="206.28" y2="236.76" stroke="#26c6da" stroke-width="1"/>
<rect x="205.13" y="227.87" width="2.3" height="5.63" fill="#26c6da"/>
<line x1="208.07" y1="224.67" x2="208.07" y2="228.66" stroke="#26c6da" stroke-width="1"/>
<rect x="206.92" y="226.46" width="2.3" height="1.41" fill="#26c6da"/>
<line x1="209.85" y1="207.67" x2="209.85" y2="230.04" stroke="#26c6da" stroke-width="1"/>
<rect x="208.70" y="210.93" width="2.3" height="15.53" fill="#26c6da"/>
<line x1="211.64" y1="209.31" x2="211.64" y2="212.31" stroke="#f4f4f4" stroke-width="1"/>
<rect x="210.49" y="210.93" width="2.3" height="0.88" fill="#f4f4f4"/>
<line x1="213.42" y1="208.69" x2="213.42" y2="212.13" stroke="#26c6da" stroke-width="1"/>
<rect x="212.27" y="209.38" width="2.3" height="2.43" fill="#26c6da"/>
<line x1="215.21" y1="208.15" x2="215.21" y2="218.38" stroke="#f4f4f4" stroke-width="1"/>
<rect x="214.06" y="209.38" width="2.3" height="8.67" fill="#f4f4f4"/>
<line x1="217.00" y1="217.19" x2="217.00" y2="233.26" stroke="#f4f4f4" stroke-width="1"/>
<rect x="215.85" y="218.05" width="2.3" height="14.27" fill="#f4f4f4"/>
<line x1="218.78" y1="230.28" x2="218.78" y2="237.10" stroke="#f4f4f4" stroke-width="1"/>
<rect x="217.63" y="232.33" width="2.3" height="1.58" fill="#f4f4f4"/>
<line x1="220.57" y1="227.14" x2="220.57" y2="235.39" stroke="#26c6da" stroke-width="1"/>
<rect x="219.42" y="229.83" width="2.3" height="4.07" fill="#26c6da"/>
<line x1="222.35" y1="209.74" x2="222.35" y2="231.72" stroke="#26c6da" stroke-width="1"/>
<rect x="221.20" y="211.23" width="2.3" height="18.60" fill="#26c6da"/>
<line x1="224.14" y1="209.88" x2="224.14" y2="212.96" stroke="#f4f4f4" stroke-width="1"/>
<rect x="222.99" y="211.23" width="2.3" height="0.80" fill="#f4f4f4"/>
<line x1="225.93" y1="211.52" x2="225.93" y2="215.57" stroke="#f4f4f4" stroke-width="1"/>
<rect x="224.78" y="211.74" width="2.3" height="2.83" fill="#f4f4f4"/>
<line x1="227.71" y1="209.04" x2="227.71" y2="215.03" stroke="#26c6da" stroke-width="1"/>
<rect x="226.56" y="212.53" width="2.3" height="2.05" fill="#26c6da"/>
<line x1="229.50" y1="210.71" x2="229.50" y2="216.14" stroke="#f4f4f4" stroke-width="1"/>
<rect x="228.35" y="212.53" width="2.3" height="1.35" fill="#f4f4f4"/>
<line x1="231.28" y1="210.77" x2="231.28" y2="216.52" stroke="#f4f4f4" stroke-width="1"/>
<rect x="230.13" y="213.88" width="2.3" height="1.86" fill="#f4f4f4"/>
<line x1="233.07" y1="188.00" x2="233.07" y2="216.64" stroke="#26c6da" stroke-width="1"/>
<rect x="231.92" y="209.57" width="2.3" height="6.17" fill="#26c6da"/>
<line x1="234.86" y1="202.75" x2="234.86" y2="211.17" stroke="#26c6da" stroke-width="1"/>
<rect x="233.71" y="204.19" width="2.3" height="5.37" fill="#26c6da"/>
<line x1="236.64" y1="200.76" x2="236.64" y2="208.54" stroke="#f4f4f4" stroke-width="1"/>
<rect x="235.49" y="204.19" width="2.3" height="1.30" fill="#f4f4f4"/>
<line x1="238.43" y1="196.89" x2="238.43" y2="205.57" stroke="#26c6da" stroke-width="1"/>
<rect x="237.28" y="200.03" width="2.3" height="5.46" fill="#26c6da"/>
<line x1="240.21" y1="199.92" x2="240.21" y2="210.33" stroke="#f4f4f4" stroke-width="1"/>
<rect x="239.06" y="200.03" width="2.3" height="7.74" fill="#f4f4f4"/>
<line x1="242.00" y1="204.55" x2="242.00" y2="220.21" stroke="#f4f4f4" stroke-width="1"/>
<rect x="240.85" y="207.78" width="2.3" height="10.73" fill="#f4f4f4"/>
<line x1="243.79" y1="202.17" x2="243.79" y2="218.51" stroke="#26c6da" stroke-width="1"/>
<rect x="242.64" y="204.29" width="2.3" height="14.22" fill="#26c6da"/>
<line x1="245.57" y1="196.22" x2="245.57" y2="207.62" stroke="#26c6da" stroke-width="1"/>
<rect x="244.42" y="197.63" width="2.3" height="6.65" fill="#26c6da"/>
<line x1="247.36" y1="194.66" x2="247.36" y2="201.56" stroke="#f4f4f4" stroke-width="1"/>
<rect x="246.21" y="197.63" width="2.3" height="0.85" fill="#f4f4f4"/>
<line x1="249.14" y1="189.73" x2="249.14" y2="199.38" stroke="#26c6da" stroke-width="1"/>
<rect x="247.99" y="193.23" width="2.3" height="5.26" fill="#26c6da"/>
<line x1="250.93" y1="180.69" x2="250.93" y2="193.78" stroke="#26c6da" stroke-width="1"/>
<rect x="249.78" y="181.08" width="2.3" height="12.14" fill="#26c6da"/>
<line x1="252.72" y1="179.20" x2="252.72" y2="187.60" stroke="#f4f4f4" stroke-width="1"/>
<rect x="251.57" y="181.08" width="2.3" height="4.06" fill="#f4f4f4"/>
<line x1="254.50" y1="167.00" x2="254.50" y2="187.74" stroke="#26c6da" stroke-width="1"/>
<rect x="253.35" y="177.13" width="2.3" height="8.01" fill="#26c6da"/>
<line x1="256.29" y1="174.80" x2="256.29" y2="182.63" stroke="#f4f4f4" stroke-width="1"/>
<rect x="255.14" y="177.13" width="2.3" height="2.75" fill="#f4f4f4"/>
<line x1="258.07" y1="178.23" x2="258.07" y2="203.08" stroke="#f4f4f4" stroke-width="1"/>
<rect x="256.92" y="179.88" width="2.3" height="21.22" fill="#f4f4f4"/>
<line x1="259.86" y1="200.95" x2="259.86" y2="216.33" stroke="#f4f4f4" stroke-width="1"/>
<rect x="258.71" y="201.09" width="2.3" height="12.42" fill="#f4f4f4"/>
<line x1="261.65" y1="212.68" x2="261.65" y2="225.21" stroke="#f4f4f4" stroke-width="1"/>
<rect x="260.50" y="213.52" width="2.3" height="8.38" fill="#f4f4f4"/>
<line x1="263.43" y1="211.09" x2="263.43" y2="222.99" stroke="#26c6da" stroke-width="1"/>
<rect x="262.28" y="213.41" width="2.3" height="8.49" fill="#26c6da"/>
<line x1="265.22" y1="212.95" x2="265.22" y2="216.37" stroke="#f4f4f4" stroke-width="1"/>
<rect x="264.07" y="213.41" width="2.3" height="2.05" fill="#f4f4f4"/>
<line x1="267.00" y1="201.29" x2="267.00" y2="217.97" stroke="#26c6da" stroke-width="1"/>
<rect x="265.85" y="203.58" width="2.3" height="11.88" fill="#26c6da"/>
<line x1="268.79" y1="198.78" x2="268.79" y2="203.83" stroke="#26c6da" stroke-width="1"/>
<rect x="267.64" y="199.19" width="2.3" height="4.39" fill="#26c6da"/>
<line x1="270.58" y1="197.30" x2="270.58" y2="206.36" stroke="#f4f4f4" stroke-width="1"/>
<rect x="269.43" y="199.19" width="2.3" height="5.08" fill="#f4f4f4"/>
<line x1="272.36" y1="202.87" x2="272.36" y2="212.32" stroke="#f4f4f4" stroke-width="1"/>
<rect x="271.21" y="204.27" width="2.3" height="7.25" fill="#f4f4f4"/>
<line x1="274.15" y1="209.36" x2="274.15" y2="223.67" stroke="#f4f4f4" stroke-width="1"/>
<rect x="273.00" y="211.52" width="2.3" height="12.12" fill="#f4f4f4"/>
<line x1="275.93" y1="222.55" x2="275.93" y2="225.72" stroke="#f4f4f4" stroke-width="1"/>
<rect x="274.78" y="223.64" width="2.3" height="0.80" fill="#f4f4f4"/>
<line x1="277.72" y1="220.61" x2="277.72" y2="227.46" stroke="#f4f4f4" stroke-width="1"/>
<rect x="276.57" y="224.06" width="2.3" height="1.08" fill="#f4f4f4"/>
<line x1="279.51" y1="216.73" x2="279.51" y2="226.85" stroke="#26c6da" stroke-width="1"/>
<rect x="278.36" y="219.92" width="2.3" height="5.22" fill="#26c6da"/>
<line x1="281.29" y1="211.03" x2="281.29" y2="220.81" stroke="#26c6da" stroke-width="1"/>
<rect x="280.14" y="211.87" width="2.3" height="8.04" fill="#26c6da"/>
<line x1="283.08" y1="208.42" x2="283.08" y2="214.70" stroke="#f4f4f4" stroke-width="1"/>
<rect x="281.93" y="211.87" width="2.3" height="0.80" fill="#f4f4f4"/>
<line x1="284.86" y1="205.15" x2="284.86" y2="212.24" stroke="#26c6da" stroke-width="1"/>
<rect x="283.71" y="206.26" width="2.3" height="5.90" fill="#26c6da"/>
<line x1="286.65" y1="204.46" x2="286.65" y2="214.81" stroke="#f4f4f4" stroke-width="1"/>
<rect x="285.50" y="206.26" width="2.3" height="6.12" fill="#f4f4f4"/>
<line x1="288.44" y1="205.82" x2="288.44" y2="213.30" stroke="#26c6da" stroke-width="1"/>
<rect x="287.29" y="207.33" width="2.3" height="5.04" fill="#26c6da"/>
<line x1="290.22" y1="190.38" x2="290.22" y2="210.67" stroke="#26c6da" stroke-width="1"/>
<rect x="289.07" y="192.78" width="2.3" height="14.55" fill="#26c6da"/>
<line x1="292.01" y1="191.96" x2="292.01" y2="207.21" stroke="#f4f4f4" stroke-width="1"/>
<rect x="290.86" y="192.78" width="2.3" height="14.31" fill="#f4f4f4"/>
<line x1="293.79" y1="205.87" x2="293.79" y2="221.03" stroke="#f4f4f4" stroke-width="1"/>
<rect x="292.64" y="207.09" width="2.3" height="12.42" fill="#f4f4f4"/>
<line x1="295.58" y1="217.05" x2="295.58" y2="225.80" stroke="#f4f4f4" stroke-width="1"/>
<rect x="294.43" y="219.51" width="2.3" height="5.57" fill="#f4f4f4"/>
<line x1="297.37" y1="219.90" x2="297.37" y2="227.75" stroke="#26c6da" stroke-width="1"/>
<rect x="296.22" y="222.77" width="2.3" height="2.32" fill="#26c6da"/>
<line x1="299.15" y1="220.95" x2="299.15" y2="236.81" stroke="#f4f4f4" stroke-width="1"/>
<rect x="298.00" y="222.77" width="2.3" height="13.31" fill="#f4f4f4"/>
<line x1="300.94" y1="232.58" x2="300.94" y2="239.60" stroke="#f4f4f4" stroke-width="1"/>
<rect x="299.79" y="236.07" width="2.3" height="2.41" fill="#f4f4f4"/>
<line x1="302.72" y1="226.86" x2="302.72" y2="245.00" stroke="#26c6da" stroke-width="1"/>
<rect x="301.57" y="229.82" width="2.3" height="8.67" fill="#26c6da"/>
<line x1="304.51" y1="218.83" x2="304.51" y2="232.55" stroke="#26c6da" stroke-width="1"/>
<rect x="303.36" y="219.63" width="2.3" height="10.19" fill="#26c6da"/>
<line x1="306.30" y1="199.32" x2="306.30" y2="223.06" stroke="#26c6da" stroke-width="1"/>
<rect x="305.15" y="200.38" width="2.3" height="19.25" fill="#26c6da"/>
<line x1="308.08" y1="188.87" x2="308.08" y2="201.06" stroke="#26c6da" stroke-width="1"/>
<rect x="306.93" y="190.65" width="2.3" height="9.73" fill="#26c6da"/>
<line x1="309.87" y1="186.37" x2="309.87" y2="192.15" stroke="#26c6da" stroke-width="1"/>
<rect x="308.72" y="187.17" width="2.3" height="3.48" fill="#26c6da"/>
<line x1="311.65" y1="175.72" x2="311.65" y2="190.59" stroke="#26c6da" stroke-width="1"/>
<rect x="310.50" y="178.11" width="2.3" height="9.06" fill="#26c6da"/>
<line x1="313.44" y1="177.59" x2="313.44" y2="190.65" stroke="#f4f4f4" stroke-width="1"/>
<rect x="312.29" y="178.11" width="2.3" height="11.12" fill="#f4f4f4"/>
<line x1="315.23" y1="163.00" x2="315.23" y2="192.74" stroke="#26c6da" stroke-width="1"/>
<rect x="314.08" y="166.65" width="2.3" height="22.58" fill="#26c6da"/>
<line x1="317.01" y1="166.14" x2="317.01" y2="171.03" stroke="#f4f4f4" stroke-width="1"/>
<rect x="315.86" y="166.65" width="2.3" height="4.19" fill="#f4f4f4"/>
<line x1="318.80" y1="170.63" x2="318.80" y2="192.18" stroke="#f4f4f4" stroke-width="1"/>
<rect x="317.65" y="170.85" width="2.3" height="19.92" fill="#f4f4f4"/>
<line x1="320.58" y1="180.22" x2="320.58" y2="193.94" stroke="#26c6da" stroke-width="1"/>
<rect x="319.43" y="183.45" width="2.3" height="7.32" fill="#26c6da"/>
<line x1="322.37" y1="170.26" x2="322.37" y2="187.04" stroke="#26c6da" stroke-width="1"/>
<rect x="321.22" y="172.90" width="2.3" height="10.55" fill="#26c6da"/>
<line x1="324.16" y1="169.54" x2="324.16" y2="187.44" stroke="#f4f4f4" stroke-width="1"/>
<rect x="323.01" y="172.90" width="2.3" height="13.36" fill="#f4f4f4"/>
<line x1="325.94" y1="176.96" x2="325.94" y2="189.62" stroke="#26c6da" stroke-width="1"/>
<rect x="324.79" y="177.62" width="2.3" height="8.63" fill="#26c6da"/>
<line x1="327.73" y1="174.94" x2="327.73" y2="189.51" stroke="#f4f4f4" stroke-width="1"/>
<rect x="326.58" y="177.62" width="2.3" height="11.78" fill="#f4f4f4"/>
<line x1="329.51" y1="187.01" x2="329.51" y2="198.39" stroke="#f4f4f4" stroke-width="1"/>
<rect x="328.36" y="189.40" width="2.3" height="7.63" fill="#f4f4f4"/>
<line x1="331.30" y1="192.67" x2="331.30" y2="198.22" stroke="#26c6da" stroke-width="1"/>
<rect x="330.15" y="194.02" width="2.3" height="3.01" fill="#26c6da"/>
<line x1="333.09" y1="183.77" x2="333.09" y2="194.03" stroke="#26c6da" stroke-width="1"/>
<rect x="331.94" y="184.38" width="2.3" height="9.63" fill="#26c6da"/>
<line x1="334.87" y1="182.66" x2="334.87" y2="185.65" stroke="#26c6da" stroke-width="1"/>
<rect x="333.72" y="183.66" width="2.3" height="0.80" fill="#26c6da"/>
<line x1="336.66" y1="180.22" x2="336.66" y2="191.50" stroke="#f4f4f4" stroke-width="1"/>
<rect x="335.51" y="183.66" width="2.3" height="7.39" fill="#f4f4f4"/>
<line x1="338.44" y1="187.58" x2="338.44" y2="191.80" stroke="#26c6da" stroke-width="1"/>
<rect x="337.29" y="191.06" width="2.3" height="0.80" fill="#26c6da"/>
<line x1="340.23" y1="189.77" x2="340.23" y2="236.00" stroke="#f4f4f4" stroke-width="1"/>
<rect x="339.08" y="191.06" width="2.3" height="15.80" fill="#f4f4f4"/>
<line x1="342.02" y1="203.90" x2="342.02" y2="208.45" stroke="#f4f4f4" stroke-width="1"/>
<rect x="340.87" y="206.86" width="2.3" height="0.80" fill="#f4f4f4"/>
<line x1="343.80" y1="206.72" x2="343.80" y2="216.80" stroke="#f4f4f4" stroke-width="1"/>
<rect x="342.65" y="206.89" width="2.3" height="8.20" fill="#f4f4f4"/>
<line x1="345.59" y1="206.25" x2="345.59" y2="218.40" stroke="#26c6da" stroke-width="1"/>
<rect x="344.44" y="207.59" width="2.3" height="7.50" fill="#26c6da"/>
<line x1="347.37" y1="206.89" x2="347.37" y2="210.30" stroke="#f4f4f4" stroke-width="1"/>
<rect x="346.22" y="207.59" width="2.3" height="1.40" fill="#f4f4f4"/>
<line x1="349.16" y1="205.76" x2="349.16" y2="220.41" stroke="#f4f4f4" stroke-width="1"/>
<rect x="348.01" y="208.99" width="2.3" height="11.31" fill="#f4f4f4"/>
<line x1="350.95" y1="218.82" x2="350.95" y2="226.08" stroke="#f4f4f4" stroke-width="1"/>
<rect x="349.80" y="220.30" width="2.3" height="2.86" fill="#f4f4f4"/>
<line x1="352.73" y1="218.54" x2="352.73" y2="223.31" stroke="#26c6da" stroke-width="1"/>
<rect x="351.58" y="221.30" width="2.3" height="1.86" fill="#26c6da"/>
<line x1="354.52" y1="220.36" x2="354.52" y2="221.52" stroke="#26c6da" stroke-width="1"/>
<rect x="353.37" y="220.48" width="2.3" height="0.81" fill="#26c6da"/>
<line x1="356.30" y1="216.86" x2="356.30" y2="221.41" stroke="#26c6da" stroke-width="1"/>
<rect x="355.15" y="220.17" width="2.3" height="0.80" fill="#26c6da"/>
<line x1="358.09" y1="215.83" x2="358.09" y2="223.40" stroke="#26c6da" stroke-width="1"/>
<rect x="356.94" y="218.52" width="2.3" height="1.65" fill="#26c6da"/>
<line x1="359.88" y1="212.15" x2="359.88" y2="219.50" stroke="#26c6da" stroke-width="1"/>
<rect x="358.73" y="213.37" width="2.3" height="5.15" fill="#26c6da"/>
<line x1="361.66" y1="209.92" x2="361.66" y2="218.82" stroke="#f4f4f4" stroke-width="1"/>
<rect x="360.51" y="213.37" width="2.3" height="3.23" fill="#f4f4f4"/>
<line x1="363.45" y1="214.20" x2="363.45" y2="219.18" stroke="#26c6da" stroke-width="1"/>
<rect x="362.30" y="215.14" width="2.3" height="1.46" fill="#26c6da"/>
<line x1="365.23" y1="211.78" x2="365.23" y2="216.13" stroke="#26c6da" stroke-width="1"/>
<rect x="364.08" y="212.91" width="2.3" height="2.23" fill="#26c6da"/>
<line x1="367.02" y1="212.90" x2="367.02" y2="218.24" stroke="#f4f4f4" stroke-width="1"/>
<rect x="365.87" y="212.91" width="2.3" height="2.60" fill="#f4f4f4"/>
<line x1="368.81" y1="211.43" x2="368.81" y2="217.80" stroke="#26c6da" stroke-width="1"/>
<rect x="367.66" y="214.73" width="2.3" height="0.80" fill="#26c6da"/>
<line x1="370.59" y1="207.10" x2="370.59" y2="214.81" stroke="#26c6da" stroke-width="1"/>
<rect x="369.44" y="210.49" width="2.3" height="4.23" fill="#26c6da"/>
<line x1="372.38" y1="204.00" x2="372.38" y2="219.94" stroke="#f4f4f4" stroke-width="1"/>
<rect x="371.23" y="210.49" width="2.3" height="7.74" fill="#f4f4f4"/>
<line x1="374.16" y1="214.79" x2="374.16" y2="226.09" stroke="#f4f4f4" stroke-width="1"/>
<rect x="373.01" y="218.23" width="2.3" height="4.43" fill="#f4f4f4"/>
<line x1="375.95" y1="218.59" x2="375.95" y2="223.56" stroke="#26c6da" stroke-width="1"/>
<rect x="374.80" y="219.98" width="2.3" height="2.68" fill="#26c6da"/>
<line x1="377.74" y1="218.43" x2="377.74" y2="237.37" stroke="#f4f4f4" stroke-width="1"/>
<rect x="376.59" y="219.98" width="2.3" height="15.62" fill="#f4f4f4"/>
<line x1="379.52" y1="232.26" x2="379.52" y2="248.61" stroke="#f4f4f4" stroke-width="1"/>
<rect x="378.37" y="235.60" width="2.3" height="12.36" fill="#f4f4f4"/>
<line x1="381.31" y1="245.07" x2="381.31" y2="263.27" stroke="#f4f4f4" stroke-width="1"/>
<rect x="380.16" y="247.96" width="2.3" height="12.66" fill="#f4f4f4"/>
<line x1="383.09" y1="251.34" x2="383.09" y2="263.40" stroke="#26c6da" stroke-width="1"/>
<rect x="381.94" y="254.30" width="2.3" height="6.32" fill="#26c6da"/>
<line x1="384.88" y1="252.11" x2="384.88" y2="258.62" stroke="#f4f4f4" stroke-width="1"/>
<rect x="383.73" y="254.30" width="2.3" height="3.14" fill="#f4f4f4"/>
<line x1="386.67" y1="254.08" x2="386.67" y2="258.75" stroke="#26c6da" stroke-width="1"/>
<rect x="385.52" y="255.23" width="2.3" height="2.22" fill="#26c6da"/>
<line x1="388.45" y1="230.41" x2="388.45" y2="255.51" stroke="#26c6da" stroke-width="1"/>
<rect x="387.30" y="233.22" width="2.3" height="22.00" fill="#26c6da"/>
<line x1="390.24" y1="232.23" x2="390.24" y2="235.93" stroke="#26c6da" stroke-width="1"/>
<rect x="389.09" y="232.94" width="2.3" height="0.80" fill="#26c6da"/>
<line x1="392.02" y1="232.05" x2="392.02" y2="253.37" stroke="#f4f4f4" stroke-width="1"/>
<rect x="390.87" y="232.94" width="2.3" height="20.20" fill="#f4f4f4"/>
<line x1="393.81" y1="253.01" x2="393.81" y2="263.14" stroke="#f4f4f4" stroke-width="1"/>
<rect x="392.66" y="253.13" width="2.3" height="8.02" fill="#f4f4f4"/>
<line x1="395.60" y1="244.19" x2="395.60" y2="264.68" stroke="#26c6da" stroke-width="1"/>
<rect x="394.45" y="245.36" width="2.3" height="15.79" fill="#26c6da"/>
<line x1="397.38" y1="242.18" x2="397.38" y2="253.69" stroke="#f4f4f4" stroke-width="1"/>
<rect x="396.23" y="245.36" width="2.3" height="4.77" fill="#f4f4f4"/>
<line x1="399.17" y1="249.18" x2="399.17" y2="263.03" stroke="#f4f4f4" stroke-width="1"/>
<rect x="398.02" y="250.13" width="2.3" height="12.59" fill="#f4f4f4"/>
<line x1="400.95" y1="262.38" x2="400.95" y2="276.43" stroke="#f4f4f4" stroke-width="1"/>
<rect x="399.80" y="262.72" width="2.3" height="11.91" fill="#f4f4f4"/>
<line x1="402.74" y1="258.18" x2="402.74" y2="276.24" stroke="#26c6da" stroke-width="1"/>
<rect x="401.59" y="260.74" width="2.3" height="13.90" fill="#26c6da"/>
<line x1="404.53" y1="259.90" x2="404.53" y2="294.00" stroke="#f4f4f4" stroke-width="1"/>
<rect x="403.38" y="260.74" width="2.3" height="24.43" fill="#f4f4f4"/>
<line x1="406.31" y1="281.99" x2="406.31" y2="287.59" stroke="#26c6da" stroke-width="1"/>
<rect x="405.16" y="284.22" width="2.3" height="0.94" fill="#26c6da"/>
<line x1="408.10" y1="271.83" x2="408.10" y2="287.27" stroke="#26c6da" stroke-width="1"/>
<rect x="406.95" y="274.52" width="2.3" height="9.70" fill="#26c6da"/>
<line x1="409.88" y1="269.94" x2="409.88" y2="274.96" stroke="#26c6da" stroke-width="1"/>
<rect x="408.73" y="272.33" width="2.3" height="2.19" fill="#26c6da"/>
<line x1="411.67" y1="264.19" x2="411.67" y2="273.39" stroke="#26c6da" stroke-width="1"/>
<rect x="410.52" y="267.22" width="2.3" height="5.11" fill="#26c6da"/>
<line x1="413.46" y1="261.25" x2="413.46" y2="268.56" stroke="#26c6da" stroke-width="1"/>
<rect x="412.31" y="263.29" width="2.3" height="3.93" fill="#26c6da"/>
<line x1="415.24" y1="260.63" x2="415.24" y2="271.53" stroke="#f4f4f4" stroke-width="1"/>
<rect x="414.09" y="263.29" width="2.3" height="7.53" fill="#f4f4f4"/>
<line x1="417.03" y1="262.56" x2="417.03" y2="271.70" stroke="#26c6da" stroke-width="1"/>
<rect x="415.88" y="263.46" width="2.3" height="7.36" fill="#26c6da"/>
<line x1="418.81" y1="262.90" x2="418.81" y2="270.49" stroke="#f4f4f4" stroke-width="1"/>
<rect x="417.66" y="263.46" width="2.3" height="3.86" fill="#f4f4f4"/>
<line x1="420.60" y1="265.23" x2="420.60" y2="271.34" stroke="#f4f4f4" stroke-width="1"/>
<rect x="419.45" y="267.31" width="2.3" height="2.85" fill="#f4f4f4"/>
<line x1="422.39" y1="258.56" x2="422.39" y2="273.73" stroke="#26c6da" stroke-width="1"/>
<rect x="421.24" y="259.98" width="2.3" height="10.18" fill="#26c6da"/>
<line x1="424.17" y1="258.16" x2="424.17" y2="264.14" stroke="#f4f4f4" stroke-width="1"/>
<rect x="423.02" y="259.98" width="2.3" height="3.32" fill="#f4f4f4"/>
<line x1="425.96" y1="260.40" x2="425.96" y2="268.92" stroke="#f4f4f4" stroke-width="1"/>
<rect x="424.81" y="263.31" width="2.3" height="3.26" fill="#f4f4f4"/>
<line x1="427.74" y1="256.63" x2="427.74" y2="266.94" stroke="#26c6da" stroke-width="1"/>
<rect x="426.59" y="260.20" width="2.3" height="6.37" fill="#26c6da"/>
<line x1="429.53" y1="248.48" x2="429.53" y2="263.14" stroke="#26c6da" stroke-width="1"/>
<rect x="428.38" y="250.19" width="2.3" height="10.00" fill="#26c6da"/>
<line x1="431.32" y1="246.92" x2="431.32" y2="253.48" stroke="#26c6da" stroke-width="1"/>
<rect x="430.17" y="249.95" width="2.3" height="0.80" fill="#26c6da"/>
<line x1="433.10" y1="249.80" x2="433.10" y2="252.10" stroke="#f4f4f4" stroke-width="1"/>
<rect x="431.95" y="249.95" width="2.3" height="1.09" fill="#f4f4f4"/>
<line x1="434.89" y1="250.61" x2="434.89" y2="271.88" stroke="#f4f4f4" stroke-width="1"/>
<rect x="433.74" y="251.04" width="2.3" height="20.15" fill="#f4f4f4"/>
<line x1="436.67" y1="267.69" x2="436.67" y2="273.46" stroke="#f4f4f4" stroke-width="1"/>
<rect x="435.52" y="271.19" width="2.3" height="0.80" fill="#f4f4f4"/>
<line x1="438.46" y1="263.93" x2="438.46" y2="272.70" stroke="#26c6da" stroke-width="1"/>
<rect x="437.31" y="267.27" width="2.3" height="4.08" fill="#26c6da"/>
<line x1="440.25" y1="264.16" x2="440.25" y2="274.51" stroke="#f4f4f4" stroke-width="1"/>
<rect x="439.10" y="267.27" width="2.3" height="5.62" fill="#f4f4f4"/>
<line x1="442.03" y1="271.96" x2="442.03" y2="277.13" stroke="#f4f4f4" stroke-width="1"/>
<rect x="440.88" y="272.89" width="2.3" height="1.44" fill="#f4f4f4"/>
<line x1="443.82" y1="265.83" x2="443.82" y2="274.71" stroke="#26c6da" stroke-width="1"/>
<rect x="442.67" y="269.23" width="2.3" height="5.09" fill="#26c6da"/>
<line x1="445.60" y1="245.60" x2="445.60" y2="271.47" stroke="#26c6da" stroke-width="1"/>
<rect x="444.45" y="265.66" width="2.3" height="3.58" fill="#26c6da"/>
<line x1="447.39" y1="264.87" x2="447.39" y2="270.10" stroke="#f4f4f4" stroke-width="1"/>
<rect x="446.24" y="265.66" width="2.3" height="3.11" fill="#f4f4f4"/>
<line x1="449.18" y1="264.90" x2="449.18" y2="269.50" stroke="#26c6da" stroke-width="1"/>
<rect x="448.03" y="265.41" width="2.3" height="3.36" fill="#26c6da"/>
<line x1="450.96" y1="261.91" x2="450.96" y2="267.57" stroke="#26c6da" stroke-width="1"/>
<rect x="449.81" y="262.83" width="2.3" height="2.58" fill="#26c6da"/>
<line x1="452.75" y1="260.48" x2="452.75" y2="303.00" stroke="#f4f4f4" stroke-width="1"/>
<rect x="451.60" y="262.83" width="2.3" height="39.06" fill="#f4f4f4"/>
<line x1="454.53" y1="294.06" x2="454.53" y2="303.07" stroke="#26c6da" stroke-width="1"/>
<rect x="453.38" y="294.10" width="2.3" height="7.79" fill="#26c6da"/>
<line x1="456.32" y1="281.32" x2="456.32" y2="294.76" stroke="#26c6da" stroke-width="1"/>
<rect x="455.17" y="283.76" width="2.3" height="10.34" fill="#26c6da"/>
<line x1="458.11" y1="282.64" x2="458.11" y2="288.47" stroke="#f4f4f4" stroke-width="1"/>
<rect x="456.96" y="283.76" width="2.3" height="3.98" fill="#f4f4f4"/>
<line x1="459.89" y1="265.95" x2="459.89" y2="289.72" stroke="#26c6da" stroke-width="1"/>
<rect x="458.74" y="268.82" width="2.3" height="18.92" fill="#26c6da"/>
<line x1="461.68" y1="268.59" x2="461.68" y2="270.26" stroke="#f4f4f4" stroke-width="1"/>
<rect x="460.53" y="268.82" width="2.3" height="1.08" fill="#f4f4f4"/>
<line x1="463.46" y1="267.04" x2="463.46" y2="271.88" stroke="#26c6da" stroke-width="1"/>
<rect x="462.31" y="268.46" width="2.3" height="1.43" fill="#26c6da"/>
<line x1="465.25" y1="259.25" x2="465.25" y2="268.79" stroke="#26c6da" stroke-width="1"/>
<rect x="464.10" y="261.55" width="2.3" height="6.91" fill="#26c6da"/>
<line x1="467.04" y1="260.96" x2="467.04" y2="264.43" stroke="#f4f4f4" stroke-width="1"/>
<rect x="465.89" y="261.55" width="2.3" height="0.80" fill="#f4f4f4"/>
<line x1="468.82" y1="260.45" x2="468.82" y2="263.34" stroke="#f4f4f4" stroke-width="1"/>
<rect x="467.67" y="261.93" width="2.3" height="0.80" fill="#f4f4f4"/>
<line x1="470.61" y1="260.41" x2="470.61" y2="265.75" stroke="#26c6da" stroke-width="1"/>
<rect x="469.46" y="261.52" width="2.3" height="0.80" fill="#26c6da"/>
<line x1="472.39" y1="260.39" x2="472.39" y2="265.96" stroke="#f4f4f4" stroke-width="1"/>
<rect x="471.24" y="261.52" width="2.3" height="2.40" fill="#f4f4f4"/>
<line x1="474.18" y1="258.66" x2="474.18" y2="265.42" stroke="#26c6da" stroke-width="1"/>
<rect x="473.03" y="259.94" width="2.3" height="3.98" fill="#26c6da"/>
<line x1="475.97" y1="254.65" x2="475.97" y2="263.53" stroke="#26c6da" stroke-width="1"/>
<rect x="474.82" y="257.76" width="2.3" height="2.18" fill="#26c6da"/>
<line x1="477.75" y1="246.62" x2="477.75" y2="258.47" stroke="#26c6da" stroke-width="1"/>
<rect x="476.60" y="247.93" width="2.3" height="9.84" fill="#26c6da"/>
<line x1="479.54" y1="245.31" x2="479.54" y2="254.17" stroke="#f4f4f4" stroke-width="1"/>
<rect x="478.39" y="247.93" width="2.3" height="5.51" fill="#f4f4f4"/>
<line x1="481.32" y1="227.74" x2="481.32" y2="256.68" stroke="#26c6da" stroke-width="1"/>
<rect x="480.17" y="227.77" width="2.3" height="25.67" fill="#26c6da"/>
<line x1="483.11" y1="221.90" x2="483.11" y2="230.72" stroke="#26c6da" stroke-width="1"/>
<rect x="481.96" y="223.43" width="2.3" height="4.34" fill="#26c6da"/>
<line x1="484.90" y1="221.97" x2="484.90" y2="227.84" stroke="#f4f4f4" stroke-width="1"/>
<rect x="483.75" y="223.43" width="2.3" height="1.23" fill="#f4f4f4"/>
<line x1="486.68" y1="223.00" x2="486.68" y2="226.95" stroke="#f4f4f4" stroke-width="1"/>
<rect x="485.53" y="224.66" width="2.3" height="1.71" fill="#f4f4f4"/>
<line x1="488.47" y1="223.20" x2="488.47" y2="228.35" stroke="#26c6da" stroke-width="1"/>
<rect x="487.32" y="223.25" width="2.3" height="3.12" fill="#26c6da"/>
<line x1="490.25" y1="220.94" x2="490.25" y2="230.63" stroke="#f4f4f4" stroke-width="1"/>
<rect x="489.10" y="223.25" width="2.3" height="4.11" fill="#f4f4f4"/>
<line x1="492.04" y1="223.41" x2="492.04" y2="229.59" stroke="#26c6da" stroke-width="1"/>
<rect x="490.89" y="223.73" width="2.3" height="3.63" fill="#26c6da"/>
<line x1="493.83" y1="221.53" x2="493.83" y2="225.55" stroke="#26c6da" stroke-width="1"/>
<rect x="492.68" y="222.87" width="2.3" height="0.86" fill="#26c6da"/>
<line x1="495.61" y1="219.58" x2="495.61" y2="223.89" stroke="#26c6da" stroke-width="1"/>
<rect x="494.46" y="220.11" width="2.3" height="2.76" fill="#26c6da"/>
<line x1="497.40" y1="209.21" x2="497.40" y2="223.44" stroke="#26c6da" stroke-width="1"/>
<rect x="496.25" y="211.08" width="2.3" height="9.03" fill="#26c6da"/>
<line x1="499.18" y1="210.69" x2="499.18" y2="219.35" stroke="#f4f4f4" stroke-width="1"/>
<rect x="498.03" y="211.08" width="2.3" height="6.50" fill="#f4f4f4"/>
<line x1="500.97" y1="212.46" x2="500.97" y2="221.06" stroke="#26c6da" stroke-width="1"/>
<rect x="499.82" y="215.36" width="2.3" height="2.22" fill="#26c6da"/>
<line x1="502.76" y1="212.07" x2="502.76" y2="215.82" stroke="#26c6da" stroke-width="1"/>
<rect x="501.61" y="212.78" width="2.3" height="2.58" fill="#26c6da"/>
<line x1="504.54" y1="209.38" x2="504.54" y2="226.77" stroke="#f4f4f4" stroke-width="1"/>
<rect x="503.39" y="212.78" width="2.3" height="10.49" fill="#f4f4f4"/>
<line x1="506.33" y1="196.31" x2="506.33" y2="223.46" stroke="#26c6da" stroke-width="1"/>
<rect x="505.18" y="198.05" width="2.3" height="25.21" fill="#26c6da"/>
<line x1="508.11" y1="194.71" x2="508.11" y2="199.45" stroke="#26c6da" stroke-width="1"/>
<rect x="506.96" y="198.04" width="2.3" height="0.80" fill="#26c6da"/>
<line x1="509.90" y1="190.43" x2="509.90" y2="200.27" stroke="#26c6da" stroke-width="1"/>
<rect x="508.75" y="193.68" width="2.3" height="4.36" fill="#26c6da"/>
<line x1="511.69" y1="185.76" x2="511.69" y2="194.26" stroke="#26c6da" stroke-width="1"/>
<rect x="510.54" y="188.72" width="2.3" height="4.96" fill="#26c6da"/>
<line x1="513.47" y1="182.90" x2="513.47" y2="189.52" stroke="#26c6da" stroke-width="1"/>
<rect x="512.32" y="185.73" width="2.3" height="3.00" fill="#26c6da"/>
<line x1="515.26" y1="184.27" x2="515.26" y2="192.23" stroke="#f4f4f4" stroke-width="1"/>
<rect x="514.11" y="185.73" width="2.3" height="3.45" fill="#f4f4f4"/>
<line x1="517.04" y1="186.19" x2="517.04" y2="190.21" stroke="#f4f4f4" stroke-width="1"/>
<rect x="515.89" y="189.18" width="2.3" height="0.80" fill="#f4f4f4"/>
<line x1="518.83" y1="188.77" x2="518.83" y2="192.37" stroke="#f4f4f4" stroke-width="1"/>
<rect x="517.68" y="189.55" width="2.3" height="1.38" fill="#f4f4f4"/>
<line x1="520.62" y1="184.53" x2="520.62" y2="192.32" stroke="#26c6da" stroke-width="1"/>
<rect x="519.47" y="186.39" width="2.3" height="4.54" fill="#26c6da"/>
<line x1="522.40" y1="185.95" x2="522.40" y2="190.12" stroke="#f4f4f4" stroke-width="1"/>
<rect x="521.25" y="186.39" width="2.3" height="2.83" fill="#f4f4f4"/>
<line x1="524.19" y1="183.33" x2="524.19" y2="192.46" stroke="#26c6da" stroke-width="1"/>
<rect x="523.04" y="185.94" width="2.3" height="3.28" fill="#26c6da"/>
<line x1="525.97" y1="182.06" x2="525.97" y2="187.97" stroke="#26c6da" stroke-width="1"/>
<rect x="524.82" y="182.21" width="2.3" height="3.74" fill="#26c6da"/>
<line x1="527.76" y1="179.48" x2="527.76" y2="185.96" stroke="#f4f4f4" stroke-width="1"/>
<rect x="526.61" y="182.21" width="2.3" height="3.62" fill="#f4f4f4"/>
<line x1="529.55" y1="172.47" x2="529.55" y2="186.25" stroke="#26c6da" stroke-width="1"/>
<rect x="528.40" y="175.48" width="2.3" height="10.34" fill="#26c6da"/>
<line x1="531.33" y1="167.79" x2="531.33" y2="177.46" stroke="#26c6da" stroke-width="1"/>
<rect x="530.18" y="169.94" width="2.3" height="5.54" fill="#26c6da"/>
<line x1="533.12" y1="165.53" x2="533.12" y2="171.05" stroke="#26c6da" stroke-width="1"/>
<rect x="531.97" y="167.79" width="2.3" height="2.15" fill="#26c6da"/>
<line x1="534.90" y1="152.00" x2="534.90" y2="169.89" stroke="#26c6da" stroke-width="1"/>
<rect x="533.75" y="164.89" width="2.3" height="2.90" fill="#26c6da"/>
<line x1="536.69" y1="163.35" x2="536.69" y2="167.28" stroke="#f4f4f4" stroke-width="1"/>
<rect x="535.54" y="164.89" width="2.3" height="0.80" fill="#f4f4f4"/>
<line x1="538.48" y1="163.30" x2="538.48" y2="171.80" stroke="#f4f4f4" stroke-width="1"/>
<rect x="537.33" y="164.91" width="2.3" height="5.32" fill="#f4f4f4"/>
<line x1="540.26" y1="167.33" x2="540.26" y2="172.45" stroke="#26c6da" stroke-width="1"/>
<rect x="539.11" y="167.42" width="2.3" height="2.81" fill="#26c6da"/>
<line x1="542.05" y1="164.47" x2="542.05" y2="168.26" stroke="#26c6da" stroke-width="1"/>
<rect x="540.90" y="166.23" width="2.3" height="1.18" fill="#26c6da"/>
<line x1="543.83" y1="163.49" x2="543.83" y2="175.35" stroke="#f4f4f4" stroke-width="1"/>
<rect x="542.68" y="166.23" width="2.3" height="6.31" fill="#f4f4f4"/>
<line x1="545.62" y1="170.83" x2="545.62" y2="173.19" stroke="#26c6da" stroke-width="1"/>
<rect x="544.47" y="172.48" width="2.3" height="0.80" fill="#26c6da"/>
<line x1="547.41" y1="170.78" x2="547.41" y2="179.89" stroke="#f4f4f4" stroke-width="1"/>
<rect x="546.26" y="172.48" width="2.3" height="7.02" fill="#f4f4f4"/>
<line x1="549.19" y1="179.04" x2="549.19" y2="184.33" stroke="#f4f4f4" stroke-width="1"/>
<rect x="548.04" y="179.50" width="2.3" height="3.28" fill="#f4f4f4"/>
<line x1="550.98" y1="182.45" x2="550.98" y2="186.72" stroke="#f4f4f4" stroke-width="1"/>
<rect x="549.83" y="182.78" width="2.3" height="2.35" fill="#f4f4f4"/>
<line x1="552.76" y1="179.77" x2="552.76" y2="185.28" stroke="#26c6da" stroke-width="1"/>
<rect x="551.61" y="181.61" width="2.3" height="3.52" fill="#26c6da"/>
<line x1="554.55" y1="179.31" x2="554.55" y2="182.79" stroke="#f4f4f4" stroke-width="1"/>
<rect x="553.40" y="181.61" width="2.3" height="0.89" fill="#f4f4f4"/>
<line x1="556.34" y1="179.86" x2="556.34" y2="185.96" stroke="#f4f4f4" stroke-width="1"/>
<rect x="555.19" y="182.50" width="2.3" height="0.80" fill="#f4f4f4"/>
<line x1="558.12" y1="181.32" x2="558.12" y2="183.87" stroke="#f4f4f4" stroke-width="1"/>
<rect x="556.97" y="183.17" width="2.3" height="0.80" fill="#f4f4f4"/>
<line x1="559.91" y1="181.86" x2="559.91" y2="190.11" stroke="#f4f4f4" stroke-width="1"/>
<rect x="558.76" y="183.68" width="2.3" height="5.08" fill="#f4f4f4"/>
<line x1="561.69" y1="185.33" x2="561.69" y2="189.81" stroke="#f4f4f4" stroke-width="1"/>
<rect x="560.54" y="188.75" width="2.3" height="0.80" fill="#f4f4f4"/>
<line x1="563.48" y1="180.91" x2="563.48" y2="192.91" stroke="#26c6da" stroke-width="1"/>
<rect x="562.33" y="183.99" width="2.3" height="5.33" fill="#26c6da"/>
<line x1="565.27" y1="162.17" x2="565.27" y2="186.93" stroke="#26c6da" stroke-width="1"/>
<rect x="564.12" y="164.81" width="2.3" height="19.19" fill="#26c6da"/>
<line x1="567.05" y1="159.59" x2="567.05" y2="168.34" stroke="#26c6da" stroke-width="1"/>
<rect x="565.90" y="160.29" width="2.3" height="4.52" fill="#26c6da"/>
<line x1="568.84" y1="158.52" x2="568.84" y2="169.32" stroke="#f4f4f4" stroke-width="1"/>
<rect x="567.69" y="160.29" width="2.3" height="5.59" fill="#f4f4f4"/>
<line x1="570.62" y1="162.58" x2="570.62" y2="166.67" stroke="#f4f4f4" stroke-width="1"/>
<rect x="569.47" y="165.88" width="2.3" height="0.80" fill="#f4f4f4"/>
<line x1="572.41" y1="163.24" x2="572.41" y2="180.40" stroke="#f4f4f4" stroke-width="1"/>
<rect x="571.26" y="166.07" width="2.3" height="10.98" fill="#f4f4f4"/>
<line x1="574.20" y1="175.05" x2="574.20" y2="178.32" stroke="#26c6da" stroke-width="1"/>
<rect x="573.05" y="175.28" width="2.3" height="1.77" fill="#26c6da"/>
<line x1="575.98" y1="172.56" x2="575.98" y2="183.70" stroke="#f4f4f4" stroke-width="1"/>
<rect x="574.83" y="175.28" width="2.3" height="7.84" fill="#f4f4f4"/>
<line x1="577.77" y1="179.90" x2="577.77" y2="184.59" stroke="#f4f4f4" stroke-width="1"/>
<rect x="576.62" y="183.13" width="2.3" height="0.80" fill="#f4f4f4"/>
<line x1="579.55" y1="180.67" x2="579.55" y2="184.73" stroke="#f4f4f4" stroke-width="1"/>
<rect x="578.40" y="183.60" width="2.3" height="0.80" fill="#f4f4f4"/>
<line x1="581.34" y1="175.58" x2="581.34" y2="187.53" stroke="#26c6da" stroke-width="1"/>
<rect x="580.19" y="177.39" width="2.3" height="6.83" fill="#26c6da"/>
<line x1="583.13" y1="176.64" x2="583.13" y2="187.48" stroke="#f4f4f4" stroke-width="1"/>
<rect x="581.98" y="177.39" width="2.3" height="9.14" fill="#f4f4f4"/>
<line x1="584.91" y1="184.71" x2="584.91" y2="190.10" stroke="#f4f4f4" stroke-width="1"/>
<rect x="583.76" y="186.53" width="2.3" height="2.42" fill="#f4f4f4"/>
<line x1="586.70" y1="182.42" x2="586.70" y2="189.60" stroke="#26c6da" stroke-width="1"/>
<rect x="585.55" y="182.55" width="2.3" height="6.40" fill="#26c6da"/>
<line x1="588.48" y1="181.97" x2="588.48" y2="210.00" stroke="#f4f4f4" stroke-width="1"/>
<rect x="587.33" y="182.55" width="2.3" height="23.10" fill="#f4f4f4"/>
<line x1="590.27" y1="199.55" x2="590.27" y2="208.87" stroke="#26c6da" stroke-width="1"/>
<rect x="589.12" y="202.00" width="2.3" height="3.65" fill="#26c6da"/>
<line x1="592.06" y1="177.14" x2="592.06" y2="204.83" stroke="#26c6da" stroke-width="1"/>
<rect x="590.91" y="177.74" width="2.3" height="24.26" fill="#26c6da"/>
<line x1="593.84" y1="177.33" x2="593.84" y2="182.79" stroke="#f4f4f4" stroke-width="1"/>
<rect x="592.69" y="177.74" width="2.3" height="3.13" fill="#f4f4f4"/>
<line x1="595.63" y1="169.75" x2="595.63" y2="182.17" stroke="#26c6da" stroke-width="1"/>
<rect x="594.48" y="172.05" width="2.3" height="8.83" fill="#26c6da"/>
<line x1="597.41" y1="168.90" x2="597.41" y2="174.33" stroke="#f4f4f4" stroke-width="1"/>
<rect x="596.26" y="172.05" width="2.3" height="0.80" fill="#f4f4f4"/>
<line x1="599.20" y1="170.25" x2="599.20" y2="178.05" stroke="#f4f4f4" stroke-width="1"/>
<rect x="598.05" y="172.33" width="2.3" height="2.54" fill="#f4f4f4"/>
<line x1="600.99" y1="173.53" x2="600.99" y2="178.45" stroke="#26c6da" stroke-width="1"/>
<rect x="599.84" y="173.90" width="2.3" height="0.97" fill="#26c6da"/>
<line x1="602.77" y1="166.02" x2="602.77" y2="175.32" stroke="#26c6da" stroke-width="1"/>
<rect x="601.62" y="168.29" width="2.3" height="5.61" fill="#26c6da"/>
<line x1="604.56" y1="165.42" x2="604.56" y2="174.16" stroke="#f4f4f4" stroke-width="1"/>
<rect x="603.41" y="168.29" width="2.3" height="4.91" fill="#f4f4f4"/>
<line x1="606.34" y1="168.88" x2="606.34" y2="175.28" stroke="#26c6da" stroke-width="1"/>
<rect x="605.19" y="172.44" width="2.3" height="0.80" fill="#26c6da"/>
<line x1="608.13" y1="163.81" x2="608.13" y2="175.19" stroke="#26c6da" stroke-width="1"/>
<rect x="606.98" y="165.10" width="2.3" height="7.34" fill="#26c6da"/>
<line x1="609.92" y1="163.39" x2="609.92" y2="165.74" stroke="#26c6da" stroke-width="1"/>
<rect x="608.77" y="164.98" width="2.3" height="0.80" fill="#26c6da"/>
<line x1="611.70" y1="162.31" x2="611.70" y2="166.77" stroke="#f4f4f4" stroke-width="1"/>
<rect x="610.55" y="164.98" width="2.3" height="1.61" fill="#f4f4f4"/>
<line x1="613.49" y1="163.64" x2="613.49" y2="170.57" stroke="#f4f4f4" stroke-width="1"/>
<rect x="612.34" y="166.60" width="2.3" height="3.06" fill="#f4f4f4"/>
<line x1="615.27" y1="159.39" x2="615.27" y2="173.20" stroke="#26c6da" stroke-width="1"/>
<rect x="614.12" y="161.69" width="2.3" height="7.96" fill="#26c6da"/>
<line x1="617.06" y1="159.58" x2="617.06" y2="167.40" stroke="#f4f4f4" stroke-width="1"/>
<rect x="615.91" y="161.69" width="2.3" height="3.32" fill="#f4f4f4"/>
<line x1="618.85" y1="158.97" x2="618.85" y2="165.02" stroke="#26c6da" stroke-width="1"/>
<rect x="617.70" y="160.09" width="2.3" height="4.92" fill="#26c6da"/>
<line x1="620.63" y1="134.68" x2="620.63" y2="160.63" stroke="#26c6da" stroke-width="1"/>
<rect x="619.48" y="134.80" width="2.3" height="25.29" fill="#26c6da"/>
<line x1="622.42" y1="130.09" x2="622.42" y2="136.36" stroke="#26c6da" stroke-width="1"/>
<rect x="621.27" y="132.31" width="2.3" height="2.49" fill="#26c6da"/>
<line x1="624.20" y1="130.07" x2="624.20" y2="135.53" stroke="#26c6da" stroke-width="1"/>
<rect x="623.05" y="131.92" width="2.3" height="0.80" fill="#26c6da"/>
<line x1="625.99" y1="127.37" x2="625.99" y2="132.74" stroke="#26c6da" stroke-width="1"/>
<rect x="624.84" y="127.84" width="2.3" height="4.08" fill="#26c6da"/>
<line x1="627.78" y1="118.74" x2="627.78" y2="127.92" stroke="#26c6da" stroke-width="1"/>
<rect x="626.63" y="121.10" width="2.3" height="6.75" fill="#26c6da"/>
<line x1="629.56" y1="107.40" x2="629.56" y2="135.02" stroke="#f4f4f4" stroke-width="1"/>
<rect x="628.41" y="121.10" width="2.3" height="12.64" fill="#f4f4f4"/>
<line x1="631.35" y1="132.08" x2="631.35" y2="135.02" stroke="#26c6da" stroke-width="1"/>
<rect x="630.20" y="132.46" width="2.3" height="1.28" fill="#26c6da"/>
<line x1="633.13" y1="131.65" x2="633.13" y2="137.19" stroke="#f4f4f4" stroke-width="1"/>
<rect x="631.98" y="132.46" width="2.3" height="2.63" fill="#f4f4f4"/>
<line x1="634.92" y1="118.00" x2="634.92" y2="135.82" stroke="#26c6da" stroke-width="1"/>
<rect x="633.77" y="125.83" width="2.3" height="9.26" fill="#26c6da"/>
<line x1="636.71" y1="123.58" x2="636.71" y2="129.99" stroke="#f4f4f4" stroke-width="1"/>
<rect x="635.56" y="125.83" width="2.3" height="2.45" fill="#f4f4f4"/>
<line x1="638.49" y1="127.12" x2="638.49" y2="131.66" stroke="#26c6da" stroke-width="1"/>
<rect x="637.34" y="127.60" width="2.3" height="0.80" fill="#26c6da"/>
<line x1="640.28" y1="126.72" x2="640.28" y2="132.73" stroke="#f4f4f4" stroke-width="1"/>
<rect x="639.13" y="127.60" width="2.3" height="4.59" fill="#f4f4f4"/>
<line x1="642.06" y1="123.63" x2="642.06" y2="134.49" stroke="#26c6da" stroke-width="1"/>
<rect x="640.91" y="123.98" width="2.3" height="8.22" fill="#26c6da"/>
<line x1="643.85" y1="119.11" x2="643.85" y2="126.79" stroke="#26c6da" stroke-width="1"/>
<rect x="642.70" y="122.25" width="2.3" height="1.72" fill="#26c6da"/>
<line x1="645.64" y1="120.80" x2="645.64" y2="129.42" stroke="#f4f4f4" stroke-width="1"/>
<rect x="644.49" y="122.25" width="2.3" height="6.22" fill="#f4f4f4"/>
<line x1="647.42" y1="128.43" x2="647.42" y2="139.35" stroke="#f4f4f4" stroke-width="1"/>
<rect x="646.27" y="128.47" width="2.3" height="8.56" fill="#f4f4f4"/>
<line x1="649.21" y1="133.25" x2="649.21" y2="138.29" stroke="#26c6da" stroke-width="1"/>
<rect x="648.06" y="135.27" width="2.3" height="1.76" fill="#26c6da"/>
<line x1="650.99" y1="122.61" x2="650.99" y2="136.87" stroke="#26c6da" stroke-width="1"/>
<rect x="649.84" y="124.93" width="2.3" height="10.34" fill="#26c6da"/>
<line x1="652.78" y1="120.82" x2="652.78" y2="127.57" stroke="#26c6da" stroke-width="1"/>
<rect x="651.63" y="124.19" width="2.3" height="0.80" fill="#26c6da"/>
<line x1="654.57" y1="123.29" x2="654.57" y2="134.93" stroke="#f4f4f4" stroke-width="1"/>
<rect x="653.42" y="124.19" width="2.3" height="7.49" fill="#f4f4f4"/>
<line x1="656.35" y1="131.52" x2="656.35" y2="133.76" stroke="#f4f4f4" stroke-width="1"/>
<rect x="655.20" y="131.67" width="2.3" height="0.80" fill="#f4f4f4"/>
<line x1="658.14" y1="130.39" x2="658.14" y2="137.15" stroke="#f4f4f4" stroke-width="1"/>
<rect x="656.99" y="131.85" width="2.3" height="4.45" fill="#f4f4f4"/>
<line x1="659.92" y1="132.79" x2="659.92" y2="139.10" stroke="#26c6da" stroke-width="1"/>
<rect x="658.77" y="133.00" width="2.3" height="3.29" fill="#26c6da"/>
<line x1="661.71" y1="132.96" x2="661.71" y2="138.36" stroke="#f4f4f4" stroke-width="1"/>
<rect x="660.56" y="133.00" width="2.3" height="3.37" fill="#f4f4f4"/>
<line x1="663.50" y1="132.99" x2="663.50" y2="148.85" stroke="#f4f4f4" stroke-width="1"/>
<rect x="662.35" y="136.37" width="2.3" height="11.96" fill="#f4f4f4"/>
<line x1="665.28" y1="143.29" x2="665.28" y2="150.53" stroke="#26c6da" stroke-width="1"/>
<rect x="664.13" y="144.01" width="2.3" height="4.32" fill="#26c6da"/>
<line x1="667.07" y1="137.23" x2="667.07" y2="146.32" stroke="#26c6da" stroke-width="1"/>
<rect x="665.92" y="139.05" width="2.3" height="4.96" fill="#26c6da"/>
<line x1="668.85" y1="136.12" x2="668.85" y2="145.91" stroke="#f4f4f4" stroke-width="1"/>
<rect x="667.70" y="139.05" width="2.3" height="6.23" fill="#f4f4f4"/>
<line x1="670.64" y1="136.39" x2="670.64" y2="146.36" stroke="#26c6da" stroke-width="1"/>
<rect x="669.49" y="137.50" width="2.3" height="7.78" fill="#26c6da"/>
<line x1="672.43" y1="135.83" x2="672.43" y2="140.71" stroke="#26c6da" stroke-width="1"/>
<rect x="671.28" y="136.00" width="2.3" height="1.50" fill="#26c6da"/>
<line x1="674.21" y1="126.10" x2="674.21" y2="138.58" stroke="#26c6da" stroke-width="1"/>
<rect x="673.06" y="128.92" width="2.3" height="7.09" fill="#26c6da"/>
<line x1="676.00" y1="128.89" x2="676.00" y2="134.73" stroke="#f4f4f4" stroke-width="1"/>
<rect x="674.85" y="128.92" width="2.3" height="2.77" fill="#f4f4f4"/>
<line x1="677.78" y1="119.22" x2="677.78" y2="133.37" stroke="#26c6da" stroke-width="1"/>
<rect x="676.63" y="121.90" width="2.3" height="9.79" fill="#26c6da"/>
<line x1="679.57" y1="119.23" x2="679.57" y2="128.83" stroke="#f4f4f4" stroke-width="1"/>
<rect x="678.42" y="121.90" width="2.3" height="5.31" fill="#f4f4f4"/>
<line x1="681.36" y1="103.00" x2="681.36" y2="127.58" stroke="#26c6da" stroke-width="1"/>
<rect x="680.21" y="115.72" width="2.3" height="11.49" fill="#26c6da"/>
<line x1="683.14" y1="114.88" x2="683.14" y2="116.47" stroke="#f4f4f4" stroke-width="1"/>
<rect x="681.99" y="115.72" width="2.3" height="0.80" fill="#f4f4f4"/>
<line x1="684.93" y1="115.12" x2="684.93" y2="130.59" stroke="#f4f4f4" stroke-width="1"/>
<rect x="683.78" y="116.33" width="2.3" height="11.56" fill="#f4f4f4"/>
<line x1="686.71" y1="125.38" x2="686.71" y2="137.68" stroke="#f4f4f4" stroke-width="1"/>
<rect x="685.56" y="127.89" width="2.3" height="6.75" fill="#f4f4f4"/>
<line x1="688.50" y1="128.74" x2="688.50" y2="135.60" stroke="#26c6da" stroke-width="1"/>
<rect x="687.35" y="131.30" width="2.3" height="3.34" fill="#26c6da"/>
<line x1="690.29" y1="129.31" x2="690.29" y2="132.94" stroke="#f4f4f4" stroke-width="1"/>
<rect x="689.14" y="131.30" width="2.3" height="0.80" fill="#f4f4f4"/>
<line x1="692.07" y1="128.53" x2="692.07" y2="142.01" stroke="#f4f4f4" stroke-width="1"/>
<rect x="690.92" y="131.37" width="2.3" height="8.75" fill="#f4f4f4"/>
<line x1="693.86" y1="137.66" x2="693.86" y2="142.43" stroke="#26c6da" stroke-width="1"/>
<rect x="692.71" y="138.62" width="2.3" height="1.51" fill="#26c6da"/>
<line x1="695.64" y1="135.14" x2="695.64" y2="141.20" stroke="#f4f4f4" stroke-width="1"/>
<rect x="694.49" y="138.62" width="2.3" height="1.80" fill="#f4f4f4"/>
<line x1="697.43" y1="133.35" x2="697.43" y2="140.47" stroke="#26c6da" stroke-width="1"/>
<rect x="696.28" y="136.52" width="2.3" height="3.90" fill="#26c6da"/>
<line x1="699.22" y1="133.94" x2="699.22" y2="137.37" stroke="#26c6da" stroke-width="1"/>
<rect x="698.07" y="134.87" width="2.3" height="1.65" fill="#26c6da"/>
<line x1="701.00" y1="132.20" x2="701.00" y2="148.94" stroke="#f4f4f4" stroke-width="1"/>
<rect x="699.85" y="134.87" width="2.3" height="10.66" fill="#f4f4f4"/>
<line x1="702.79" y1="142.85" x2="702.79" y2="153.10" stroke="#f4f4f4" stroke-width="1"/>
<rect x="701.64" y="145.54" width="2.3" height="6.39" fill="#f4f4f4"/>
<line x1="704.57" y1="148.76" x2="704.57" y2="155.90" stroke="#f4f4f4" stroke-width="1"/>
<rect x="703.42" y="151.93" width="2.3" height="2.79" fill="#f4f4f4"/>
<line x1="706.36" y1="153.86" x2="706.36" y2="162.69" stroke="#f4f4f4" stroke-width="1"/>
<rect x="705.21" y="154.72" width="2.3" height="4.70" fill="#f4f4f4"/>
<line x1="708.15" y1="152.13" x2="708.15" y2="161.91" stroke="#26c6da" stroke-width="1"/>
<rect x="707.00" y="154.40" width="2.3" height="5.02" fill="#26c6da"/>
<line x1="709.93" y1="152.00" x2="709.93" y2="165.60" stroke="#f4f4f4" stroke-width="1"/>
<rect x="708.78" y="154.40" width="2.3" height="7.68" fill="#f4f4f4"/>
<line x1="711.72" y1="158.25" x2="711.72" y2="165.10" stroke="#26c6da" stroke-width="1"/>
<rect x="710.57" y="159.94" width="2.3" height="2.14" fill="#26c6da"/>
<line x1="713.50" y1="157.43" x2="713.50" y2="168.23" stroke="#f4f4f4" stroke-width="1"/>
<rect x="712.35" y="159.94" width="2.3" height="5.20" fill="#f4f4f4"/>
<line x1="715.29" y1="157.30" x2="715.29" y2="167.75" stroke="#26c6da" stroke-width="1"/>
<rect x="714.14" y="158.88" width="2.3" height="6.26" fill="#26c6da"/>
<line x1="717.08" y1="155.16" x2="717.08" y2="159.99" stroke="#26c6da" stroke-width="1"/>
<rect x="715.93" y="157.22" width="2.3" height="1.66" fill="#26c6da"/>
<line x1="718.86" y1="150.43" x2="718.86" y2="159.46" stroke="#26c6da" stroke-width="1"/>
<rect x="717.71" y="151.19" width="2.3" height="6.03" fill="#26c6da"/>
<line x1="720.65" y1="150.91" x2="720.65" y2="161.77" stroke="#f4f4f4" stroke-width="1"/>
<rect x="719.50" y="151.19" width="2.3" height="7.30" fill="#f4f4f4"/>
<line x1="722.43" y1="157.37" x2="722.43" y2="158.59" stroke="#26c6da" stroke-width="1"/>
<rect x="721.28" y="157.89" width="2.3" height="0.80" fill="#26c6da"/>
<line x1="724.22" y1="155.02" x2="724.22" y2="161.23" stroke="#26c6da" stroke-width="1"/>
<rect x="723.07" y="155.40" width="2.3" height="2.49" fill="#26c6da"/>
<line x1="726.01" y1="154.16" x2="726.01" y2="156.68" stroke="#f4f4f4" stroke-width="1"/>
<rect x="724.86" y="155.40" width="2.3" height="0.80" fill="#f4f4f4"/>
<line x1="727.79" y1="156.06" x2="727.79" y2="158.02" stroke="#f4f4f4" stroke-width="1"/>
<rect x="726.64" y="156.17" width="2.3" height="1.70" fill="#f4f4f4"/>
<line x1="729.58" y1="143.19" x2="729.58" y2="160.15" stroke="#26c6da" stroke-width="1"/>
<rect x="728.43" y="145.68" width="2.3" height="12.18" fill="#26c6da"/>
<line x1="731.36" y1="143.18" x2="731.36" y2="154.84" stroke="#f4f4f4" stroke-width="1"/>
<rect x="730.21" y="145.68" width="2.3" height="6.50" fill="#f4f4f4"/>
<line x1="733.15" y1="141.13" x2="733.15" y2="154.31" stroke="#26c6da" stroke-width="1"/>
<rect x="732.00" y="141.36" width="2.3" height="10.82" fill="#26c6da"/>
<line x1="734.94" y1="138.98" x2="734.94" y2="144.31" stroke="#26c6da" stroke-width="1"/>
<rect x="733.79" y="140.29" width="2.3" height="1.07" fill="#26c6da"/>
<line x1="736.72" y1="137.34" x2="736.72" y2="145.65" stroke="#f4f4f4" stroke-width="1"/>
<rect x="735.57" y="140.29" width="2.3" height="2.14" fill="#f4f4f4"/>
<line x1="738.51" y1="136.68" x2="738.51" y2="145.56" stroke="#26c6da" stroke-width="1"/>
<rect x="737.36" y="136.92" width="2.3" height="5.52" fill="#26c6da"/>
<line x1="740.29" y1="133.45" x2="740.29" y2="140.32" stroke="#26c6da" stroke-width="1"/>
<rect x="739.14" y="136.74" width="2.3" height="0.80" fill="#26c6da"/>
<line x1="742.08" y1="136.35" x2="742.08" y2="138.06" stroke="#f4f4f4" stroke-width="1"/>
<rect x="740.93" y="136.74" width="2.3" height="0.80" fill="#f4f4f4"/>
<line x1="743.87" y1="136.91" x2="743.87" y2="139.50" stroke="#f4f4f4" stroke-width="1"/>
<rect x="742.72" y="137.31" width="2.3" height="2.06" fill="#f4f4f4"/>
<line x1="745.65" y1="129.05" x2="745.65" y2="142.30" stroke="#26c6da" stroke-width="1"/>
<rect x="744.50" y="132.10" width="2.3" height="7.28" fill="#26c6da"/>
<line x1="747.44" y1="129.82" x2="747.44" y2="141.78" stroke="#f4f4f4" stroke-width="1"/>
<rect x="746.29" y="132.10" width="2.3" height="6.71" fill="#f4f4f4"/>
<line x1="749.22" y1="136.54" x2="749.22" y2="140.91" stroke="#f4f4f4" stroke-width="1"/>
<rect x="748.07" y="138.81" width="2.3" height="1.07" fill="#f4f4f4"/>
<line x1="751.01" y1="137.00" x2="751.01" y2="143.00" stroke="#f4f4f4" stroke-width="1"/>
<rect x="749.86" y="138.00" width="2.3" height="3.00" fill="#f4f4f4"/>
<line x1="752.80" y1="140.00" x2="752.80" y2="153.00" stroke="#f4f4f4" stroke-width="1"/>
<rect x="751.65" y="141.00" width="2.3" height="10.00" fill="#f4f4f4"/>
<line x1="754.58" y1="148.00" x2="754.58" y2="156.00" stroke="#f4f4f4" stroke-width="1"/>
<rect x="753.43" y="151.00" width="2.3" height="3.00" fill="#f4f4f4"/>
<line x1="756.37" y1="146.00" x2="756.37" y2="156.00" stroke="#26c6da" stroke-width="1"/>
<rect x="755.22" y="149.00" width="2.3" height="5.00" fill="#26c6da"/>
<line x1="758.15" y1="148.00" x2="758.15" y2="167.00" stroke="#f4f4f4" stroke-width="1"/>
<rect x="757.00" y="149.00" width="2.3" height="17.00" fill="#f4f4f4"/>
<line x1="759.94" y1="159.00" x2="759.94" y2="168.00" stroke="#26c6da" stroke-width="1"/>
<rect x="758.79" y="164.00" width="2.3" height="2.00" fill="#26c6da"/>
<line x1="761.73" y1="160.00" x2="761.73" y2="165.00" stroke="#26c6da" stroke-width="1"/>
<rect x="760.58" y="163.00" width="2.3" height="1.00" fill="#26c6da"/>
<line x1="763.51" y1="152.00" x2="763.51" y2="164.00" stroke="#26c6da" stroke-width="1"/>
<rect x="762.36" y="154.00" width="2.3" height="9.00" fill="#26c6da"/>
<line x1="765.30" y1="143.00" x2="765.30" y2="156.00" stroke="#26c6da" stroke-width="1"/>
<rect x="764.15" y="145.00" width="2.3" height="9.00" fill="#26c6da"/>
<line x1="767.08" y1="141.00" x2="767.08" y2="149.00" stroke="#f4f4f4" stroke-width="1"/>
<rect x="765.93" y="145.00" width="2.3" height="1.00" fill="#f4f4f4"/>
<line x1="768.87" y1="126.00" x2="768.87" y2="147.00" stroke="#26c6da" stroke-width="1"/>
<rect x="767.72" y="128.00" width="2.3" height="18.00" fill="#26c6da"/>
<line x1="770.66" y1="116.00" x2="770.66" y2="129.00" stroke="#26c6da" stroke-width="1"/>
<rect x="769.51" y="118.00" width="2.3" height="10.00" fill="#26c6da"/>
<line x1="772.44" y1="109.00" x2="772.44" y2="119.00" stroke="#26c6da" stroke-width="1"/>
<rect x="771.29" y="111.00" width="2.3" height="7.00" fill="#26c6da"/>
<line x1="774.23" y1="102.00" x2="774.23" y2="113.00" stroke="#26c6da" stroke-width="1"/>
<rect x="773.08" y="104.00" width="2.3" height="7.00" fill="#26c6da"/>
<line x1="776.01" y1="95.50" x2="776.01" y2="106.00" stroke="#26c6da" stroke-width="1"/>
<rect x="774.86" y="99.00" width="2.3" height="5.00" fill="#26c6da"/>
<line x1="777.80" y1="97.00" x2="777.80" y2="106.00" stroke="#f4f4f4" stroke-width="1"/>
<rect x="776.65" y="99.00" width="2.3" height="5.00" fill="#f4f4f4"/>
<line x1="779.59" y1="98.00" x2="779.59" y2="106.00" stroke="#26c6da" stroke-width="1"/>
<rect x="778.44" y="100.00" width="2.3" height="4.00" fill="#26c6da"/>
<line x1="781.37" y1="99.00" x2="781.37" y2="111.00" stroke="#f4f4f4" stroke-width="1"/>
<rect x="780.22" y="100.00" width="2.3" height="9.00" fill="#f4f4f4"/>
<line x1="783.16" y1="107.00" x2="783.16" y2="118.00" stroke="#f4f4f4" stroke-width="1"/>
<rect x="782.01" y="109.00" width="2.3" height="7.00" fill="#f4f4f4"/>
<line x1="784.94" y1="114.00" x2="784.94" y2="163.00" stroke="#f4f4f4" stroke-width="1"/>
<rect x="783.79" y="116.00" width="2.3" height="34.00" fill="#f4f4f4"/>
<line x1="786.73" y1="147.00" x2="786.73" y2="162.00" stroke="#f4f4f4" stroke-width="1"/>
<rect x="785.58" y="150.00" width="2.3" height="10.00" fill="#f4f4f4"/>
<line x1="788.52" y1="139.00" x2="788.52" y2="161.00" stroke="#26c6da" stroke-width="1"/>
<rect x="787.37" y="141.00" width="2.3" height="19.00" fill="#26c6da"/>
<line x1="790.30" y1="138.00" x2="790.30" y2="150.00" stroke="#f4f4f4" stroke-width="1"/>
<rect x="789.15" y="141.00" width="2.3" height="2.00" fill="#f4f4f4"/>
<line x1="792.09" y1="140.00" x2="792.09" y2="158.00" stroke="#f4f4f4" stroke-width="1"/>
<rect x="790.94" y="143.00" width="2.3" height="7.00" fill="#f4f4f4"/>
<line x1="793.87" y1="148.00" x2="793.87" y2="162.00" stroke="#f4f4f4" stroke-width="1"/>
<rect x="792.72" y="150.00" width="2.3" height="6.00" fill="#f4f4f4"/>
<line x1="795.66" y1="152.00" x2="795.66" y2="167.00" stroke="#f4f4f4" stroke-width="1"/>
<rect x="794.51" y="156.00" width="2.3" height="7.00" fill="#f4f4f4"/>
<line x1="797.45" y1="160.00" x2="797.45" y2="172.00" stroke="#f4f4f4" stroke-width="1"/>
<rect x="796.30" y="163.00" width="2.3" height="8.05" fill="#f4f4f4"/>
<line x1="46" y1="171.2" x2="888" y2="171.2" stroke="#bdbdbd" stroke-width="1" stroke-dasharray="1,2"/>
<polyline points="47.33,483.87 49.11,484.03 50.90,483.46 52.68,484.59 54.47,485.42 56.26,485.78 58.04,486.98 59.83,486.68 61.61,487.33 63.40,487.00 65.19,487.08 66.97,487.76 68.76,488.81 70.54,488.27 72.33,489.61 74.12,490.17 75.90,490.08 77.69,488.64 79.47,487.85 81.26,488.54 83.05,487.13 84.83,487.67 86.62,486.53 88.40,486.47 90.19,486.50 91.98,486.13 93.76,486.33 95.55,484.50 97.33,484.69 99.12,484.68 100.91,484.32 102.69,484.43 104.48,483.50 106.26,483.15 108.05,482.95 109.84,483.42 111.62,482.94 113.41,482.99 115.19,484.14 116.98,485.24 118.77,485.45 120.55,486.18 122.34,485.80 124.12,485.18 125.91,485.28 127.70,485.15 129.48,485.97 131.27,486.32 133.05,485.88 134.84,486.51 136.63,484.66 138.41,484.77 140.20,484.45 141.98,482.00 143.77,482.31 145.56,481.45 147.34,481.90 149.13,481.99 150.91,481.66 152.70,482.37 154.49,481.81 156.27,482.70 158.06,482.09 159.84,482.14 161.63,481.77 163.42,481.88 165.20,481.18 166.99,479.09 168.77,479.16 170.56,478.75 172.35,480.59 174.13,480.97 175.92,481.68 177.70,481.82 179.49,480.45 181.28,476.76 183.06,476.45 184.85,476.30 186.63,475.99 188.42,473.21 190.21,469.04 191.99,468.43 193.78,468.94 195.56,467.13 197.35,467.09 199.14,467.44 200.92,468.75 202.71,466.45 204.49,466.50 206.28,465.63 208.07,465.41 209.85,463.01 211.64,463.15 213.42,462.77 215.21,464.11 217.00,466.31 218.78,466.56 220.57,465.93 222.35,463.06 224.14,463.14 225.93,463.57 227.71,463.26 229.50,463.47 231.28,463.75 233.07,462.80 234.86,461.97 236.64,462.17 238.43,461.33 240.21,462.52 242.00,464.18 243.79,461.99 245.57,460.96 247.36,461.09 249.14,460.28 250.93,458.40 252.72,459.03 254.50,457.79 256.29,458.22 258.07,461.49 259.86,463.41 261.65,464.70 263.43,463.39 265.22,463.71 267.00,461.88 268.79,461.20 270.58,461.98 272.36,463.10 274.15,464.97 275.93,465.04 277.72,465.20 279.51,464.40 281.29,463.16 283.08,463.20 284.86,462.29 286.65,463.23 288.44,462.46 290.22,460.21 292.01,462.42 293.79,464.34 295.58,465.20 297.37,464.84 299.15,466.89 300.94,467.26 302.72,465.93 304.51,464.35 306.30,461.38 308.08,459.88 309.87,459.34 311.65,457.94 313.44,459.66 315.23,456.17 317.01,456.82 318.80,459.90 320.58,458.77 322.37,457.14 324.16,459.20 325.94,457.87 327.73,459.69 329.51,460.86 331.30,460.40 333.09,458.91 334.87,458.80 336.66,459.94 338.44,459.94 340.23,462.38 342.02,462.39 343.80,463.65 345.59,462.50 347.37,462.71 349.16,464.46 350.95,464.90 352.73,464.61 354.52,464.49 356.30,464.44 358.09,464.18 359.88,463.39 361.66,463.89 363.45,463.66 365.23,463.32 367.02,463.72 368.81,463.60 370.59,462.94 372.38,464.14 374.16,464.82 375.95,464.41 377.74,466.82 379.52,468.73 381.31,470.68 383.09,469.71 384.88,470.19 386.67,469.85 388.45,466.45 390.24,466.41 392.02,469.53 393.81,470.76 395.60,468.33 397.38,469.06 399.17,471.01 400.95,472.85 402.74,470.70 404.53,474.47 406.31,474.33 408.10,472.83 409.88,472.49 411.67,471.70 413.46,471.09 415.24,472.26 417.03,471.12 418.81,471.72 420.60,472.16 422.39,470.58 424.17,471.10 425.96,471.60 427.74,470.62 429.53,469.07 431.32,469.04 433.10,469.20 434.89,472.32 436.67,472.34 438.46,471.71 440.25,472.58 442.03,472.80 443.82,472.01 445.60,471.46 447.39,471.94 449.18,471.42 450.96,471.02 452.75,477.06 454.53,475.85 456.32,474.26 458.11,474.87 459.89,471.95 461.68,472.11 463.46,471.89 465.25,470.83 467.04,470.88 468.82,470.95 470.61,470.82 472.39,471.19 474.18,470.58 475.97,470.24 477.75,468.72 479.54,469.57 481.32,465.61 483.11,464.94 484.90,465.13 486.68,465.39 488.47,464.91 490.25,465.55 492.04,464.99 493.83,464.85 495.61,464.43 497.40,463.03 499.18,464.04 500.97,463.70 502.76,463.30 504.54,464.92 506.33,461.02 508.11,461.02 509.90,460.35 511.69,459.58 513.47,459.12 515.26,459.65 517.04,459.71 518.83,459.92 520.62,459.22 522.40,459.66 524.19,459.15 525.97,458.58 527.76,459.14 529.55,457.54 531.33,456.68 533.12,456.35 534.90,455.90 536.69,455.91 538.48,456.73 540.26,456.29 542.05,456.11 543.83,457.08 545.62,457.08 547.41,458.16 549.19,458.66 550.98,459.03 552.76,458.48 554.55,458.62 556.34,458.72 558.12,458.80 559.91,459.59 561.69,459.67 563.48,458.85 565.27,455.89 567.05,455.19 568.84,456.06 570.62,456.09 572.41,457.78 574.20,457.51 575.98,458.72 577.77,458.79 579.55,458.89 581.34,457.83 583.13,459.24 584.91,459.62 586.70,458.63 588.48,462.20 590.27,461.63 592.06,457.89 593.84,458.37 595.63,457.01 597.41,457.05 599.20,457.44 600.99,457.29 602.77,456.43 604.56,457.19 606.34,457.07 608.13,455.94 609.92,455.92 611.70,456.17 613.49,456.64 615.27,455.41 617.06,455.92 618.85,455.16 620.63,451.26 622.42,450.87 624.20,450.81 625.99,450.18 627.78,449.14 629.56,451.09 631.35,450.90 633.13,451.30 634.92,449.87 636.71,450.25 638.49,450.15 640.28,450.85 642.06,449.59 643.85,449.32 645.64,450.28 647.42,451.60 649.21,451.33 650.99,449.73 652.78,449.62 654.57,450.77 656.35,450.80 658.14,451.49 659.92,450.98 661.71,451.50 663.50,453.35 665.28,452.68 667.07,451.91 668.85,452.88 670.64,451.67 672.43,451.44 674.21,450.35 676.00,450.78 677.78,449.27 679.57,450.08 681.36,448.31 683.14,448.41 684.93,450.19 686.71,451.23 688.50,450.72 690.29,450.73 692.07,452.08 693.86,451.85 695.64,452.12 697.43,451.52 699.22,451.27 701.00,452.92 702.79,453.90 704.57,454.33 706.36,455.06 708.15,454.28 709.93,455.47 711.72,455.14 713.50,455.94 715.29,454.97 717.08,454.72 718.86,453.79 720.65,454.91 722.43,454.82 724.22,454.44 726.01,454.56 727.79,454.82 729.58,452.94 731.36,453.94 733.15,452.27 734.94,452.11 736.72,452.44 738.51,451.58 740.29,451.56 742.08,451.65 743.87,451.96 745.65,450.84 747.44,451.88 749.22,452.04 751.01,452.21 752.80,453.76 754.58,454.22 756.37,453.45 758.15,456.07 759.94,455.77 761.73,455.61 763.51,454.22 765.30,452.83 767.08,452.99 768.87,450.21 770.66,448.66 772.44,447.58 774.23,446.50 776.01,445.73 777.80,446.50 779.59,445.88 781.37,447.27 783.16,448.35 784.94,453.60 786.73,455.15 788.52,452.21 790.30,452.52 792.09,453.60 793.87,454.53 795.66,455.61 797.45,456.85" fill="none" stroke="#4654c4" stroke-width="0.9"/>
<line x1="46" y1="524.1" x2="797.7" y2="524.1" stroke="#d6d6d6" stroke-width="1.6"/>
<circle cx="84.6" cy="524.1" r="2.2" fill="#22d184"/>
<circle cx="118.8" cy="524.1" r="2.2" fill="#ec5a66"/>
<circle cx="142" cy="524.1" r="2.7" fill="#f7da10"/>
<circle cx="290.3" cy="524.1" r="2.2" fill="#22d184"/>
<circle cx="452.8" cy="524.1" r="2.2" fill="#ec5a66"/>
<circle cx="597.3" cy="524.1" r="2.2" fill="#22d184"/>
<circle cx="678.4" cy="524.1" r="2.2" fill="#22d184"/>
<circle cx="771" cy="524.1" r="2.7" fill="#f7da10"/>
<text x="40.3" y="426.97" font-family="Liberation Sans, sans-serif" font-size="8.5" fill="#c4c4c4" text-anchor="end">45,000</text>
<text x="40.3" y="406.73" font-family="Liberation Sans, sans-serif" font-size="8.5" fill="#c4c4c4" text-anchor="end">50,000</text>
<text x="40.3" y="386.50" font-family="Liberation Sans, sans-serif" font-size="8.5" fill="#c4c4c4" text-anchor="end">55,000</text>
<text x="40.3" y="366.26" font-family="Liberation Sans, sans-serif" font-size="8.5" fill="#c4c4c4" text-anchor="end">60,000</text>
<text x="40.3" y="346.02" font-family="Liberation Sans, sans-serif" font-size="8.5" fill="#c4c4c4" text-anchor="end">65,000</text>
<text x="40.3" y="325.79" font-family="Liberation Sans, sans-serif" font-size="8.5" fill="#c4c4c4" text-anchor="end">70,000</text>
<text x="40.3" y="305.55" font-family="Liberation Sans, sans-serif" font-size="8.5" fill="#c4c4c4" text-anchor="end">75,000</text>
<text x="40.3" y="285.32" font-family="Liberation Sans, sans-serif" font-size="8.5" fill="#c4c4c4" text-anchor="end">80,000</text>
<text x="40.3" y="265.08" font-family="Liberation Sans, sans-serif" font-size="8.5" fill="#c4c4c4" text-anchor="end">85,000</text>
<text x="40.3" y="244.85" font-family="Liberation Sans, sans-serif" font-size="8.5" fill="#c4c4c4" text-anchor="end">90,000</text>
<text x="40.3" y="224.61" font-family="Liberation Sans, sans-serif" font-size="8.5" fill="#c4c4c4" text-anchor="end">95,000</text>
<text x="40.3" y="204.38" font-family="Liberation Sans, sans-serif" font-size="8.5" fill="#c4c4c4" text-anchor="end">100,000</text>
<text x="40.3" y="184.15" font-family="Liberation Sans, sans-serif" font-size="8.5" fill="#c4c4c4" text-anchor="end">105,000</text>
<text x="40.3" y="163.91" font-family="Liberation Sans, sans-serif" font-size="8.5" fill="#c4c4c4" text-anchor="end">110,000</text>
<text x="40.3" y="143.68" font-family="Liberation Sans, sans-serif" font-size="8.5" fill="#c4c4c4" text-anchor="end">115,000</text>
<text x="40.3" y="123.44" font-family="Liberation Sans, sans-serif" font-size="8.5" fill="#c4c4c4" text-anchor="end">120,000</text>
<text x="40.3" y="103.20" font-family="Liberation Sans, sans-serif" font-size="8.5" fill="#c4c4c4" text-anchor="end">125,000</text>
<text x="40.3" y="82.97" font-family="Liberation Sans, sans-serif" font-size="8.5" fill="#c4c4c4" text-anchor="end">130,000</text>
<text x="40.3" y="62.73" font-family="Liberation Sans, sans-serif" font-size="8.5" fill="#c4c4c4" text-anchor="end">135,000</text>
<text x="40.3" y="42.50" font-family="Liberation Sans, sans-serif" font-size="8.5" fill="#c4c4c4" text-anchor="end">140,000</text>
<text x="40.3" y="22.27" font-family="Liberation Sans, sans-serif" font-size="8.5" fill="#c4c4c4" text-anchor="end">145,000</text>
<rect x="0" y="0" width="46" height="21.3" fill="#0f0f0f"/>
<rect x="2.7" y="2.6" width="40.8" height="16.2" rx="2.5" fill="#0f0f0f" stroke="#2e2e2e" stroke-width="1"/>
<text x="8.7" y="13.4" font-family="Liberation Sans, sans-serif" font-size="8.5" font-weight="bold" fill="#d6d6d6" textLength="15.6" lengthAdjust="spacingAndGlyphs">USD</text>
<text x="51.5" y="13.3" font-family="Liberation Sans, sans-serif" font-size="8.3" fill="#d8d8d8" stroke="#d8d8d8" stroke-width="0.28" textLength="129.5" lengthAdjust="spacingAndGlyphs">Bitcoin / U.S. Dollar · 1D · Bitstamp</text>
<text x="51.5" y="23.6" font-family="Liberation Sans, sans-serif" font-size="8.5" fill="#cccccc" textLength="175.2" lengthAdjust="spacingAndGlyphs">SummitCloud (25, 55, 1, 0, 0.1, 70, Custom, 3, 0)</text>
<text x="51.5" y="450.1" font-family="Liberation Sans, sans-serif" font-size="8.5" fill="#cccccc" textLength="345.3" lengthAdjust="spacingAndGlyphs">SummitLine (12, 26, 9, 14, 20, 3, 55, 45, 1.1, 0.9, 5, 15, 60, 1.25, 0.02, 53, 47, 1.05, 0.85, 12, 10)</text>
<rect x="6" y="125.5" width="39.5" height="22.5" rx="1" fill="#ffffff"/>
<text x="40.3" y="133.8" font-family="Liberation Sans, sans-serif" font-size="8.5" fill="#131313" text-anchor="end">114,793</text>
<text x="40.3" y="144.8" font-family="Liberation Sans, sans-serif" font-size="8.5" fill="#131313" text-anchor="end">114,742</text>
<rect x="3" y="166" width="42.5" height="19.5" rx="1" fill="#ffffff"/>
<text x="40.3" y="174.3" font-family="Liberation Sans, sans-serif" font-size="8.5" fill="#131313" text-anchor="end">107,669</text>
<text x="40.3" y="182.8" font-family="Liberation Sans, sans-serif" font-size="8.3" fill="#444" text-anchor="end">17:27:35</text>
<text x="920" y="476.3" font-family="Liberation Sans, sans-serif" font-size="8.5" fill="#c4c4c4" text-anchor="end">80,000</text>
<text x="920" y="500.6" font-family="Liberation Sans, sans-serif" font-size="8.5" fill="#c4c4c4" text-anchor="end">40,000</text>
<rect x="889.1" y="440.5" width="39.7" height="21.2" rx="1.5" fill="#2962ff"/>
<text x="924.7" y="448.3" font-family="Liberation Sans, sans-serif" font-size="8.5" fill="#ffffff" text-anchor="end">107,669</text>
<text x="924.7" y="459.2" font-family="Liberation Sans, sans-serif" font-size="8.5" fill="#ffffff" text-anchor="end">107,669</text>
<rect x="889.1" y="487.20" width="13.5" height="10.8" fill="#f7d10c"/>
<text x="895.85" y="495.40" font-family="Liberation Sans, sans-serif" font-size="8.5" fill="#2a2a2a" text-anchor="middle">0</text>
<rect x="889.1" y="497.90" width="13.5" height="10.8" fill="#f05a5e"/>
<text x="895.85" y="506.10" font-family="Liberation Sans, sans-serif" font-size="8.5" fill="#fff" text-anchor="middle">0</text>
<rect x="889.1" y="508.60" width="13.5" height="10.8" fill="#20d27a"/>
<text x="895.85" y="516.80" font-family="Liberation Sans, sans-serif" font-size="8.5" fill="#1a1a1a" text-anchor="middle">0</text>
<rect x="889.1" y="519.30" width="13.5" height="10.8" fill="#ffffff"/>
<text x="895.85" y="527.50" font-family="Liberation Sans, sans-serif" font-size="8.5" fill="#2a2a2a" text-anchor="middle">0</text>
<text x="63.4" y="543.9" font-family="Liberation Sans, sans-serif" font-size="8.3" fill="#c4c4c4" text-anchor="middle">Sep</text>
<text x="117.0" y="543.9" font-family="Liberation Sans, sans-serif" font-size="8.3" fill="#c4c4c4" text-anchor="middle">Oct</text>
<text x="172.3" y="543.9" font-family="Liberation Sans, sans-serif" font-size="8.3" fill="#c4c4c4" text-anchor="middle">Nov</text>
<text x="225.9" y="543.9" font-family="Liberation Sans, sans-serif" font-size="8.3" fill="#c4c4c4" text-anchor="middle">Dec</text>
<text x="281.3" y="543.9" font-family="Liberation Sans, sans-serif" font-size="8.9" font-weight="bold" fill="#c4c4c4" text-anchor="middle">2025</text>
<text x="336.7" y="543.9" font-family="Liberation Sans, sans-serif" font-size="8.3" fill="#c4c4c4" text-anchor="middle">Feb</text>
<text x="386.7" y="543.9" font-family="Liberation Sans, sans-serif" font-size="8.3" fill="#c4c4c4" text-anchor="middle">Mar</text>
<text x="442.0" y="543.9" font-family="Liberation Sans, sans-serif" font-size="8.3" fill="#c4c4c4" text-anchor="middle">Apr</text>
<text x="495.6" y="543.9" font-family="Liberation Sans, sans-serif" font-size="8.3" fill="#c4c4c4" text-anchor="middle">May</text>
<text x="551.0" y="543.9" font-family="Liberation Sans, sans-serif" font-size="8.3" fill="#c4c4c4" text-anchor="middle">Jun</text>
<text x="604.6" y="543.9" font-family="Liberation Sans, sans-serif" font-size="8.3" fill="#c4c4c4" text-anchor="middle">Jul</text>
<text x="659.9" y="543.9" font-family="Liberation Sans, sans-serif" font-size="8.3" fill="#c4c4c4" text-anchor="middle">Aug</text>
<text x="715.3" y="543.9" font-family="Liberation Sans, sans-serif" font-size="8.3" fill="#c4c4c4" text-anchor="middle">Sep</text>
<text x="768.9" y="543.9" font-family="Liberation Sans, sans-serif" font-size="8.3" fill="#c4c4c4" text-anchor="middle">Oct</text>
<text x="824.2" y="543.9" font-family="Liberation Sans, sans-serif" font-size="8.3" fill="#c4c4c4" text-anchor="middle">Nov</text>
<text x="877.8" y="543.9" font-family="Liberation Sans, sans-serif" font-size="8.3" fill="#c4c4c4" text-anchor="middle">Dec</text>
<circle cx="23.2" cy="541.2" r="5.6" fill="#222"/>
<text x="23.2" y="544" font-family="Liberation Sans, sans-serif" font-size="7" fill="#aaa" text-anchor="middle">Z</text>
<circle cx="910.4" cy="541.2" r="5.6" fill="#222"/>
<text x="910.4" y="544" font-family="Liberation Sans, sans-serif" font-size="7" fill="#aaa" text-anchor="middle">A</text>
<path d="M793.2,409.6 A5.9,5.9 0 1 1 792.9,415.6" fill="none" stroke="#9a4fd6" stroke-width="1.15"/>
<path d="M801.0,407.9 L796.4,412.9 L798.9,412.9 L795.9,416.7 L801.3,411.3 L798.7,411.3 Z" fill="#b14fe0"/>
<circle cx="802.3" cy="407.0" r="1.8" fill="#e8504f"/>
<path d="M790.4,411.2 Q790.8,413.1 792.7,413.5 Q790.8,413.9 790.4,415.8 Q790.0,413.9 788.1,413.5 Q790.0,413.1 790.4,411.2 Z" fill="#7060f5"/>
<circle cx="797.6" cy="427" r="6.7" fill="#0f0f0f" stroke="#c62828" stroke-width="1.4"/>
<clipPath id="fc"><circle cx="797.6" cy="427" r="4.8"/></clipPath>
<g clip-path="url(#fc)"><rect x="792" y="421" width="12" height="12" fill="#fff"/><rect x="792" y="422" width="12" height="1.6" fill="#e53935"/><rect x="792" y="425.2" width="12" height="1.6" fill="#e53935"/><rect x="792" y="428.4" width="12" height="1.6" fill="#e53935"/><rect x="792" y="431.2" width="12" height="2" fill="#e53935"/><rect x="792" y="421" width="5.6" height="5.6" fill="#42a5f5"/></g>
</svg>
</body></html>
